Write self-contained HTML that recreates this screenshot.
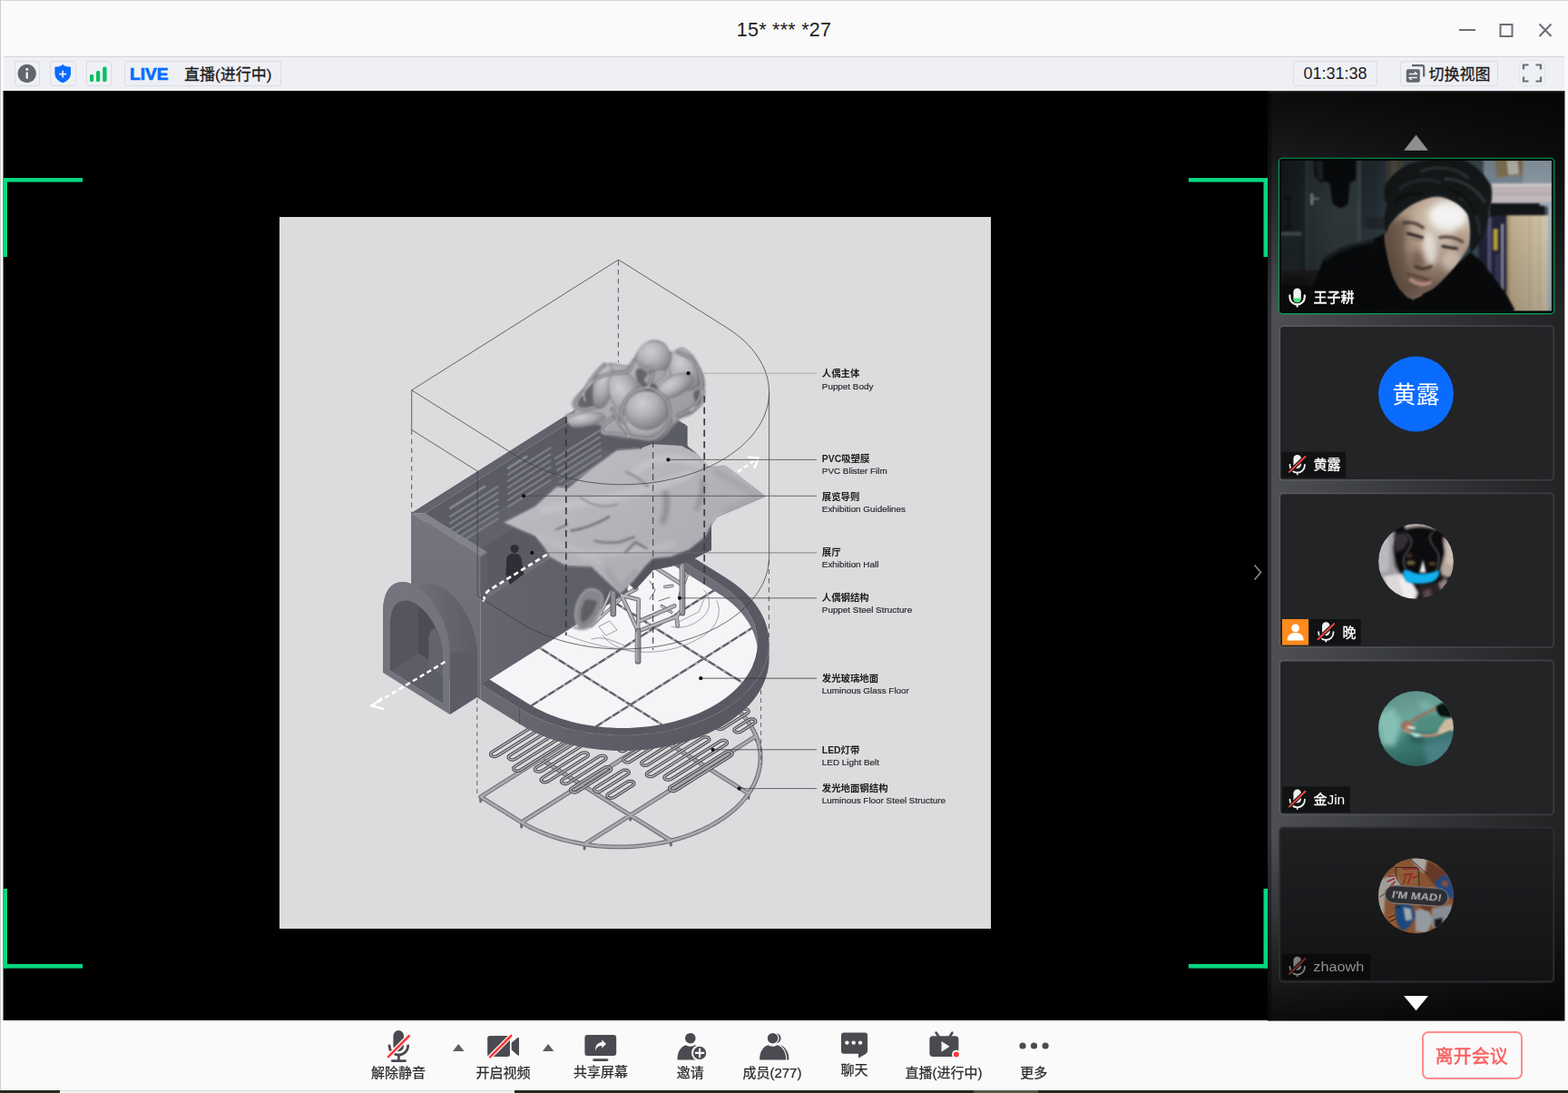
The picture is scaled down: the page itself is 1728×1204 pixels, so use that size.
<!DOCTYPE html>
<html lang="zh"><head><meta charset="utf-8"><title>腾讯会议</title>
<style>
html,body{margin:0;padding:0}
body{width:1728px;height:1204px;position:relative;overflow:hidden;background:#fafafa;font-family:"Liberation Sans",sans-serif;color:#1a1a1a}
.abs{position:absolute}
svg.ov{position:absolute;left:0;top:0;width:1728px;height:1204px;overflow:visible;pointer-events:none}
#titlebar{left:0;top:0;width:1728px;height:62px;background:#fafafa;border-top:1px solid #d6d6d6;border-left:1px solid #cfcfcf;box-sizing:border-box}
#title{left:0;top:20.5px;width:1728px;text-align:center;font-size:21.5px;line-height:25px;letter-spacing:0.25px;color:#222}
#toolbar{left:4px;top:62px;width:1720px;height:38px;background:#eff0f5;border-top:1px solid #d4d5d9;box-sizing:border-box}
.tb{position:absolute;top:67px;height:28px;box-sizing:border-box;border:1px solid #dcdde2;border-radius:3px;background:#eff0f5}
#time{left:1425px;width:93px;font-size:18px;line-height:27px;text-align:center;color:#1c1c1c}
#stage{left:4px;top:100px;width:1394px;height:1024px;background:#000}
#sidebar{left:1398px;top:100px;width:326px;height:1024px;background:linear-gradient(180deg,#0b0b0c 0%,#101011 4%,#2b2c2e 22%,#434447 38%,#48494d 50%,#434447 62%,#2b2c2e 80%,#101011 96%,#0b0b0c 100%)}
#bottombar{left:1px;top:1124px;width:1727px;height:77px;background:#fafafa}
#deskstrip{left:0;top:1201px;width:1728px;height:3px;background:#262a1c}
.tile{position:absolute;left:1410px;width:303px;height:171px;box-sizing:border-box;border:1px solid #55565a;border-radius:4px;background:#242528;overflow:hidden}
.tag{position:absolute;height:28px;background:#111213;color:#fff;font-size:15px;line-height:28px}
#leave{left:1567px;top:1136px;width:111px;height:53px;box-sizing:border-box;border:2px solid #ff8c8c;border-radius:7px;background:#fafafa}
</style>
</head>
<body>
<div id="titlebar" class="abs"></div>
<div class="abs" style="left:0;top:0;width:1px;height:1201px;background:#cdcdcd"></div>
<div id="title" class="abs">15* *** *27</div>
<div id="toolbar" class="abs"></div>
<div class="tb" style="left:16px;width:28px"></div>
<div class="tb" style="left:55px;width:29px"></div>
<div class="tb" style="left:95px;width:28px"></div>
<div class="tb" style="left:137px;width:173px"></div>
<div class="tb" id="time">01:31:38</div>
<div class="tb" style="left:1543px;width:108px"></div>
<div class="tb" style="left:1674px;top:66px;width:29px;height:29px;border-radius:6px;border-color:#e3e4e8"></div>
<div id="stage" class="abs"></div>
<div class="abs" style="left:3px;top:100px;width:1px;height:1024px;background:#7c7c7c"></div>
<div id="sidebar" class="abs"></div>
<div id="bottombar" class="abs"></div>
<div id="deskstrip" class="abs"></div>
<div class="abs" style="left:66px;top:1201px;width:501px;height:3px;background:#f4f4f4;border-top:1px solid #d9d9d9;box-sizing:border-box"></div>
<div class="abs" style="left:1073px;top:1201px;width:71px;height:3px;background:#565949"></div>
<svg class="ov" viewBox="0 0 1728 1204" aria-label="window chrome">
  <!-- window controls -->
  <g stroke="#6b6e76" stroke-width="2" fill="none">
    <path d="M1608 33H1626"/>
    <rect x="1653.5" y="27" width="13" height="13"/>
    <path d="M1696.5 26.5L1709.5 40M1709.5 26.5L1696.5 40"/>
  </g>
  <!-- info -->
  <circle cx="29.7" cy="81" r="10.2" fill="#63666d"/>
  <circle cx="29.7" cy="76.3" r="1.5" fill="#eff0f5"/>
  <rect x="28.5" y="79.3" width="2.4" height="7.6" rx="1.2" fill="#eff0f5"/>
  <!-- shield -->
  <path d="M69.2 71 C66.5 73.3 63.5 73.6 60.4 73.7 V80.5 C60.4 86 64.2 89.6 69.2 91.2 C74.2 89.6 78 86 78 80.5 V73.7 C74.9 73.6 71.9 73.3 69.2 71Z" fill="#0a6cff"/>
  <path d="M69.2 78.2V85M65.8 81.6H72.6" stroke="#eff0f5" stroke-width="1.6" stroke-linecap="round"/>
  <!-- signal -->
  <g fill="#07c160">
    <rect x="99" y="82" width="4.2" height="8" rx="1.6"/>
    <rect x="106" y="78" width="4.2" height="12" rx="1.6"/>
    <rect x="113.2" y="73.6" width="4.4" height="16.4" rx="1.6"/>
  </g>
  <!-- LIVE -->
  <text x="143" y="87.6" font-family="Liberation Sans, sans-serif" font-weight="bold" font-size="19" fill="#0a6cff" stroke="#0a6cff" stroke-width="0.7" textLength="42.5" lengthAdjust="spacingAndGlyphs">LIVE</text>
  <g stroke="#1a1a1a" stroke-width="0.3"><text x="203" y="88.4" font-family="Liberation Sans, Noto Sans CJK SC, sans-serif" font-size="17" fill="#1a1a1a">直播(进行中)</text></g>
  <!-- switch view icon -->
  <g>
    <path d="M1556 72.2H1567.2Q1569.2 72.2 1569.2 74.2V84.5" fill="none" stroke="#63666d" stroke-width="2.2"/>
    <rect x="1549.8" y="76.2" width="15" height="14.6" rx="1.8" fill="#63666d"/>
    <path d="M1552.8 81.6H1561.6L1559 79.2M1561.8 85.6H1553L1555.6 88" fill="none" stroke="#eff0f5" stroke-width="1.5" stroke-linejoin="round"/>
  </g>
  <g stroke="#1a1a1a" stroke-width="0.3"><text x="1574.4" y="88.3" font-family="Liberation Sans, Noto Sans CJK SC, sans-serif" font-size="17" fill="#1a1a1a">切换视图</text></g>
  <!-- fullscreen -->
  <path d="M1679 76.5V71.5H1684.5M1692.5 71.5H1698V76.5M1698 84.5V89.5H1692.5M1684.5 89.5H1679V84.5" fill="none" stroke="#6b6e76" stroke-width="2.2"/>
</svg>
<svg class="ov" viewBox="0 0 1728 1204" aria-label="shared screen">
<defs><clipPath id="contentclip"><rect x="308" y="239" width="784" height="784"/></clipPath><filter color-interpolation-filters="sRGB" id="vidblur" x="0" y="0" width="100%" height="100%"><feGaussianBlur stdDeviation="0.55"/></filter></defs>
<!-- green brackets -->
<g fill="#05d780">
<rect x="3.5" y="196" width="87.5" height="4.5"/><rect x="3.5" y="196" width="4.5" height="87"/>
<rect x="1309.8" y="196" width="87.3" height="4.5"/><rect x="1392.5" y="196" width="4.6" height="87"/>
<rect x="3.5" y="1062" width="87.5" height="4.6"/><rect x="3.5" y="979" width="4.5" height="87.6"/>
<rect x="1309.8" y="1062" width="87.3" height="4.6"/><rect x="1392.5" y="979" width="4.6" height="87.6"/>
</g>
<g clip-path="url(#contentclip)"><g filter="url(#vidblur)">
<rect x="308" y="239" width="784" height="784" fill="#dcdcde"/>
<g fill="none" stroke-linecap="round" stroke-linejoin="round"><path d="M529.7 877.7v5M574.7 905.9v5M739.3 926.1v5M825 874.2v5M644.1 930v5M833.3 810.8v5M694.7 898.1v5M724.7 811.3v5" stroke="#6c6c72" stroke-width="3"/><path d="M529.7 877.7L749.7 738.9 M574.7 905.9L794.7 767.2 M644.1 930L833.3 810.8 M529.7 877.7L572.5 904.5 M595.7 836L739.3 926.1 M679.7 783.1L825 874.2 M749.7 738.9L792.5 765.8 M792.5 765.8L798.1 769.5L803.4 773.4L808.4 777.4L813 781.6L817.2 786L821.1 790.5L824.6 795.1L827.7 799.8L830.4 804.6L832.8 809.6L834.7 814.5L836.1 819.6L837.2 824.6L837.9 829.7L838.1 834.9L837.9 840L837.2 845.1L836.1 850.2L834.7 855.2L832.8 860.2L830.4 865.1L827.7 869.9L824.6 874.7L821.1 879.3L817.2 883.8L813 888.2L808.4 892.4L803.4 896.5L798.1 900.4L792.5 904.1L786.6 907.6L780.4 911L773.9 914.1L767.2 917L760.3 919.7L753.1 922.2L745.8 924.4L738.2 926.3L730.6 928.1L722.8 929.5L714.8 930.7L706.8 931.7L698.8 932.4L690.6 932.8L682.5 932.9L674.4 932.8L666.2 932.4L658.2 931.8L650.2 930.9L642.2 929.7L634.4 928.2L626.8 926.5L619.2 924.6L611.9 922.4L604.7 920L597.8 917.3L591.1 914.4L584.6 911.3L578.4 908L572.5 904.5" stroke="#66666c" stroke-width="4.8"/><path d="M529.7 877.7L749.7 738.9 M574.7 905.9L794.7 767.2 M644.1 930L833.3 810.8 M529.7 877.7L572.5 904.5 M595.7 836L739.3 926.1 M679.7 783.1L825 874.2 M749.7 738.9L792.5 765.8 M792.5 765.8L798.1 769.5L803.4 773.4L808.4 777.4L813 781.6L817.2 786L821.1 790.5L824.6 795.1L827.7 799.8L830.4 804.6L832.8 809.6L834.7 814.5L836.1 819.6L837.2 824.6L837.9 829.7L838.1 834.9L837.9 840L837.2 845.1L836.1 850.2L834.7 855.2L832.8 860.2L830.4 865.1L827.7 869.9L824.6 874.7L821.1 879.3L817.2 883.8L813 888.2L808.4 892.4L803.4 896.5L798.1 900.4L792.5 904.1L786.6 907.6L780.4 911L773.9 914.1L767.2 917L760.3 919.7L753.1 922.2L745.8 924.4L738.2 926.3L730.6 928.1L722.8 929.5L714.8 930.7L706.8 931.7L698.8 932.4L690.6 932.8L682.5 932.9L674.4 932.8L666.2 932.4L658.2 931.8L650.2 930.9L642.2 929.7L634.4 928.2L626.8 926.5L619.2 924.6L611.9 922.4L604.7 920L597.8 917.3L591.1 914.4L584.6 911.3L578.4 908L572.5 904.5" stroke="#a9a9af" stroke-width="2.9"/></g>
<g fill="none" stroke-linejoin="round"><path d="M548 832.7L546 833.4L543.8 833.4L541.8 832.7L540.7 831.5L540.7 830L541.8 828.8L590.6 798L592.6 797.3L594.8 797.3L596.8 798L597.9 799.2L597.9 800.7L596.8 801.9ZM567.6 836.2L565.6 836.9L563.4 836.9L561.4 836.2L560.3 834.9L560.3 833.5L561.4 832.3L610.2 801.5L612.2 800.8L614.4 800.8L616.4 801.5L617.5 802.7L617.5 804.2L616.4 805.4ZM573.2 848.5L571.2 849.2L569 849.2L567 848.5L565.9 847.3L565.9 845.8L567 844.6L615.8 813.8L617.8 813.1L620 813.1L622 813.8L623.1 815.1L623.1 816.5L622 817.7ZM596.8 849.4L594.9 850.1L592.6 850.1L590.6 849.4L589.5 848.2L589.5 846.8L590.6 845.5L635.4 817.3L637.4 816.6L639.6 816.6L641.6 817.3L642.7 818.5L642.7 820L641.6 821.2ZM603.7 861L601.7 861.7L599.4 861.7L597.5 861L596.3 859.7L596.3 858.3L597.5 857.1L641 829.6L643 828.9L645.2 828.9L647.2 829.6L648.3 830.9L648.3 832.3L647.2 833.5ZM626.1 862.7L624.1 863.4L621.8 863.4L619.9 862.7L618.7 861.5L618.7 860L619.9 858.8L660.6 833.1L662.6 832.4L664.8 832.4L666.8 833.1L667.9 834.3L667.9 835.8L666.8 837ZM636.1 872.2L634.2 872.9L631.9 872.9L629.9 872.2L628.8 871L628.8 869.5L629.9 868.3L666.2 845.4L668.2 844.7L670.4 844.7L672.4 845.4L673.5 846.7L673.5 848.1L672.4 849.3ZM662.1 871.6L660.2 872.4L657.9 872.4L655.9 871.6L654.8 870.4L654.8 869L655.9 867.7L685.8 848.9L687.8 848.2L690 848.2L692 848.9L693.1 850.1L693.1 851.6L692 852.8ZM676.5 878.4L674.5 879.1L672.2 879.2L670.3 878.4L669.1 877.2L669.1 875.8L670.3 874.5L691.4 861.2L693.4 860.5L695.6 860.5L697.6 861.2L698.7 862.5L698.7 863.9L697.6 865.1ZM619 791.7L617 792.4L614.8 792.4L612.8 791.7L611.7 790.5L611.7 789L612.8 787.8L673.6 749.5L675.6 748.8L677.8 748.7L679.8 749.5L680.9 750.7L680.9 752.1L679.8 753.4ZM638.6 795.2L636.6 795.9L634.4 795.9L632.4 795.2L631.3 794L631.3 792.5L632.4 791.3L693.2 753L695.2 752.2L697.4 752.2L699.4 752.9L700.5 754.2L700.5 755.6L699.4 756.8ZM644.2 807.5L642.2 808.2L640 808.2L638 807.5L636.9 806.3L636.9 804.8L638 803.6L698.8 765.3L700.8 764.6L703 764.5L705 765.3L706.1 766.5L706.1 767.9L705 769.2ZM663.8 811L661.8 811.7L659.6 811.7L657.6 811L656.5 809.8L656.5 808.3L657.6 807.1L718.4 768.8L720.4 768L722.6 768L724.6 768.7L725.7 770L725.7 771.4L724.6 772.6ZM669.4 823.3L667.4 824L665.2 824L663.2 823.3L662.1 822.1L662.1 820.6L663.2 819.4L724 781.1L726 780.4L728.2 780.3L730.2 781.1L731.3 782.3L731.3 783.7L730.2 785ZM689 826.8L687 827.5L684.8 827.5L682.8 826.8L681.7 825.6L681.7 824.1L682.8 822.9L743.6 784.6L745.6 783.8L747.8 783.8L749.8 784.5L750.9 785.8L750.9 787.2L749.8 788.4ZM694.6 839.1L692.6 839.8L690.4 839.8L688.4 839.1L687.3 837.9L687.3 836.4L688.4 835.2L749.2 796.9L751.2 796.2L753.4 796.1L755.4 796.9L756.5 798.1L756.5 799.5L755.4 800.8ZM714.2 842.6L712.2 843.3L710 843.3L708 842.6L706.9 841.4L706.9 839.9L708 838.7L768.8 800.4L770.8 799.6L773 799.6L775 800.3L776.1 801.6L776.1 803L775 804.2ZM719.8 854.9L717.8 855.6L715.6 855.6L713.6 854.9L712.5 853.7L712.5 852.2L713.6 851L774.4 812.7L776.4 812L778.6 811.9L780.6 812.7L781.7 813.9L781.7 815.3L780.6 816.6ZM739.4 858.4L737.4 859.1L735.2 859.1L733.2 858.4L732.1 857.2L732.1 855.7L733.2 854.5L794 816.2L796 815.4L798.2 815.4L800.2 816.1L801.3 817.4L801.3 818.8L800.2 820ZM745 870.7L743 871.4L740.8 871.4L738.8 870.7L737.7 869.5L737.7 868L738.8 866.8L799.6 828.5L801.6 827.8L803.8 827.7L805.8 828.5L806.9 829.7L806.9 831.1L805.8 832.4ZM696 739.4L694 740.1L691.8 740.1L689.8 739.4L688.7 738.1L688.7 736.7L689.8 735.5L746.6 699.7L748.6 699L750.8 698.9L752.8 699.7L753.9 700.9L753.9 702.3L752.8 703.6ZM715.6 742.9L713.6 743.6L711.4 743.6L709.4 742.9L708.3 741.6L708.3 740.2L709.4 739L766.2 703.2L768.2 702.4L770.4 702.4L772.4 703.1L773.5 704.4L773.5 705.8L772.4 707ZM721.2 755.2L719.2 755.9L717 755.9L715 755.2L713.9 753.9L713.9 752.5L715 751.3L771.8 715.5L773.8 714.8L776 714.7L778 715.5L779.1 716.7L779.1 718.1L778 719.4ZM740.8 758.7L738.8 759.4L736.6 759.4L734.6 758.7L733.5 757.4L733.5 756L734.6 754.8L785.3 722.8L787.2 722.1L789.5 722.1L791.5 722.8L792.6 724L792.6 725.5L791.5 726.7ZM746.4 771L744.4 771.7L742.2 771.7L740.2 771L739.1 769.7L739.1 768.3L740.2 767.1L789.6 735.9L791.6 735.2L793.9 735.2L795.8 735.9L797 737.1L797 738.6L795.8 739.8ZM766 774.5L764 775.2L761.8 775.2L759.8 774.5L758.7 773.2L758.7 771.8L759.8 770.6L806.4 741.2L808.4 740.5L810.7 740.4L812.6 741.2L813.8 742.4L813.8 743.8L812.6 745.1ZM771.6 786.8L769.6 787.5L767.4 787.5L765.4 786.8L764.3 785.5L764.3 784.1L765.4 782.9L807.6 756.3L809.5 755.6L811.8 755.6L813.8 756.3L814.9 757.5L814.9 758.9L813.8 760.2ZM791.2 790.3L789.2 791L787 791L785 790.3L783.9 789L783.9 787.6L785 786.4L820.8 763.8L822.7 763.1L825 763.1L827 763.8L828.1 765L828.1 766.5L827 767.7ZM796.8 802.6L794.8 803.3L792.6 803.3L790.6 802.6L789.5 801.3L789.5 799.9L790.6 798.7L817.6 781.6L819.6 780.9L821.9 780.9L823.8 781.6L825 782.9L825 784.3L823.8 785.5ZM816.4 806.1L814.4 806.8L812.2 806.8L810.2 806.1L809.1 804.8L809.1 803.4L810.2 802.2L825.2 792.7L827.2 792L829.5 792L831.4 792.7L832.6 793.9L832.6 795.3L831.4 796.6Z" stroke="#4f4f55" stroke-width="3.5"/><path d="M548 832.7L546 833.4L543.8 833.4L541.8 832.7L540.7 831.5L540.7 830L541.8 828.8L590.6 798L592.6 797.3L594.8 797.3L596.8 798L597.9 799.2L597.9 800.7L596.8 801.9ZM567.6 836.2L565.6 836.9L563.4 836.9L561.4 836.2L560.3 834.9L560.3 833.5L561.4 832.3L610.2 801.5L612.2 800.8L614.4 800.8L616.4 801.5L617.5 802.7L617.5 804.2L616.4 805.4ZM573.2 848.5L571.2 849.2L569 849.2L567 848.5L565.9 847.3L565.9 845.8L567 844.6L615.8 813.8L617.8 813.1L620 813.1L622 813.8L623.1 815.1L623.1 816.5L622 817.7ZM596.8 849.4L594.9 850.1L592.6 850.1L590.6 849.4L589.5 848.2L589.5 846.8L590.6 845.5L635.4 817.3L637.4 816.6L639.6 816.6L641.6 817.3L642.7 818.5L642.7 820L641.6 821.2ZM603.7 861L601.7 861.7L599.4 861.7L597.5 861L596.3 859.7L596.3 858.3L597.5 857.1L641 829.6L643 828.9L645.2 828.9L647.2 829.6L648.3 830.9L648.3 832.3L647.2 833.5ZM626.1 862.7L624.1 863.4L621.8 863.4L619.9 862.7L618.7 861.5L618.7 860L619.9 858.8L660.6 833.1L662.6 832.4L664.8 832.4L666.8 833.1L667.9 834.3L667.9 835.8L666.8 837ZM636.1 872.2L634.2 872.9L631.9 872.9L629.9 872.2L628.8 871L628.8 869.5L629.9 868.3L666.2 845.4L668.2 844.7L670.4 844.7L672.4 845.4L673.5 846.7L673.5 848.1L672.4 849.3ZM662.1 871.6L660.2 872.4L657.9 872.4L655.9 871.6L654.8 870.4L654.8 869L655.9 867.7L685.8 848.9L687.8 848.2L690 848.2L692 848.9L693.1 850.1L693.1 851.6L692 852.8ZM676.5 878.4L674.5 879.1L672.2 879.2L670.3 878.4L669.1 877.2L669.1 875.8L670.3 874.5L691.4 861.2L693.4 860.5L695.6 860.5L697.6 861.2L698.7 862.5L698.7 863.9L697.6 865.1ZM619 791.7L617 792.4L614.8 792.4L612.8 791.7L611.7 790.5L611.7 789L612.8 787.8L673.6 749.5L675.6 748.8L677.8 748.7L679.8 749.5L680.9 750.7L680.9 752.1L679.8 753.4ZM638.6 795.2L636.6 795.9L634.4 795.9L632.4 795.2L631.3 794L631.3 792.5L632.4 791.3L693.2 753L695.2 752.2L697.4 752.2L699.4 752.9L700.5 754.2L700.5 755.6L699.4 756.8ZM644.2 807.5L642.2 808.2L640 808.2L638 807.5L636.9 806.3L636.9 804.8L638 803.6L698.8 765.3L700.8 764.6L703 764.5L705 765.3L706.1 766.5L706.1 767.9L705 769.2ZM663.8 811L661.8 811.7L659.6 811.7L657.6 811L656.5 809.8L656.5 808.3L657.6 807.1L718.4 768.8L720.4 768L722.6 768L724.6 768.7L725.7 770L725.7 771.4L724.6 772.6ZM669.4 823.3L667.4 824L665.2 824L663.2 823.3L662.1 822.1L662.1 820.6L663.2 819.4L724 781.1L726 780.4L728.2 780.3L730.2 781.1L731.3 782.3L731.3 783.7L730.2 785ZM689 826.8L687 827.5L684.8 827.5L682.8 826.8L681.7 825.6L681.7 824.1L682.8 822.9L743.6 784.6L745.6 783.8L747.8 783.8L749.8 784.5L750.9 785.8L750.9 787.2L749.8 788.4ZM694.6 839.1L692.6 839.8L690.4 839.8L688.4 839.1L687.3 837.9L687.3 836.4L688.4 835.2L749.2 796.9L751.2 796.2L753.4 796.1L755.4 796.9L756.5 798.1L756.5 799.5L755.4 800.8ZM714.2 842.6L712.2 843.3L710 843.3L708 842.6L706.9 841.4L706.9 839.9L708 838.7L768.8 800.4L770.8 799.6L773 799.6L775 800.3L776.1 801.6L776.1 803L775 804.2ZM719.8 854.9L717.8 855.6L715.6 855.6L713.6 854.9L712.5 853.7L712.5 852.2L713.6 851L774.4 812.7L776.4 812L778.6 811.9L780.6 812.7L781.7 813.9L781.7 815.3L780.6 816.6ZM739.4 858.4L737.4 859.1L735.2 859.1L733.2 858.4L732.1 857.2L732.1 855.7L733.2 854.5L794 816.2L796 815.4L798.2 815.4L800.2 816.1L801.3 817.4L801.3 818.8L800.2 820ZM745 870.7L743 871.4L740.8 871.4L738.8 870.7L737.7 869.5L737.7 868L738.8 866.8L799.6 828.5L801.6 827.8L803.8 827.7L805.8 828.5L806.9 829.7L806.9 831.1L805.8 832.4ZM696 739.4L694 740.1L691.8 740.1L689.8 739.4L688.7 738.1L688.7 736.7L689.8 735.5L746.6 699.7L748.6 699L750.8 698.9L752.8 699.7L753.9 700.9L753.9 702.3L752.8 703.6ZM715.6 742.9L713.6 743.6L711.4 743.6L709.4 742.9L708.3 741.6L708.3 740.2L709.4 739L766.2 703.2L768.2 702.4L770.4 702.4L772.4 703.1L773.5 704.4L773.5 705.8L772.4 707ZM721.2 755.2L719.2 755.9L717 755.9L715 755.2L713.9 753.9L713.9 752.5L715 751.3L771.8 715.5L773.8 714.8L776 714.7L778 715.5L779.1 716.7L779.1 718.1L778 719.4ZM740.8 758.7L738.8 759.4L736.6 759.4L734.6 758.7L733.5 757.4L733.5 756L734.6 754.8L785.3 722.8L787.2 722.1L789.5 722.1L791.5 722.8L792.6 724L792.6 725.5L791.5 726.7ZM746.4 771L744.4 771.7L742.2 771.7L740.2 771L739.1 769.7L739.1 768.3L740.2 767.1L789.6 735.9L791.6 735.2L793.9 735.2L795.8 735.9L797 737.1L797 738.6L795.8 739.8ZM766 774.5L764 775.2L761.8 775.2L759.8 774.5L758.7 773.2L758.7 771.8L759.8 770.6L806.4 741.2L808.4 740.5L810.7 740.4L812.6 741.2L813.8 742.4L813.8 743.8L812.6 745.1ZM771.6 786.8L769.6 787.5L767.4 787.5L765.4 786.8L764.3 785.5L764.3 784.1L765.4 782.9L807.6 756.3L809.5 755.6L811.8 755.6L813.8 756.3L814.9 757.5L814.9 758.9L813.8 760.2ZM791.2 790.3L789.2 791L787 791L785 790.3L783.9 789L783.9 787.6L785 786.4L820.8 763.8L822.7 763.1L825 763.1L827 763.8L828.1 765L828.1 766.5L827 767.7ZM796.8 802.6L794.8 803.3L792.6 803.3L790.6 802.6L789.5 801.3L789.5 799.9L790.6 798.7L817.6 781.6L819.6 780.9L821.9 780.9L823.8 781.6L825 782.9L825 784.3L823.8 785.5ZM816.4 806.1L814.4 806.8L812.2 806.8L810.2 806.1L809.1 804.8L809.1 803.4L810.2 802.2L825.2 792.7L827.2 792L829.5 792L831.4 792.7L832.6 793.9L832.6 795.3L831.4 796.6Z" stroke="#c2c2c7" stroke-width="1.15"/></g>
<path d="M525.8 770V874M838.6 760V842" stroke="#55555a" stroke-width="0.9" stroke-dasharray="5 4" fill="none"/>
<path d="M513.7 744.6L741.6 600.9L792.4 642.8L797.8 646.4L802.9 650.2L807.7 654.1L812.1 658.1L816.2 662.3L820 666.6L823.3 671.1L826.3 675.6L829 680.3L831.2 685L833 689.8L834.4 694.6L835.5 699.5L836.1 704.4L836.3 709.4L836.1 714.3L835.5 719.2L834.4 724.1L833 729L831.2 733.8L829 738.5L826.3 743.2L823.3 747.7L820 752.2L816.2 756.5L812.1 760.7L807.7 764.8L802.9 768.7L797.8 772.5L792.4 776.1L786.7 779.5L780.7 782.7L774.5 785.7L768.1 788.5L761.4 791.1L754.5 793.5L747.4 795.6L740.1 797.5L732.8 799.2L725.2 800.6L717.6 801.7L709.9 802.7L702.1 803.3L694.3 803.7L686.5 803.9L678.6 803.7L670.8 803.4L663 802.7L655.3 801.8L647.7 800.7L640.1 799.3L632.8 797.7L625.5 795.8L618.4 793.7L611.5 791.4L604.8 788.8L598.4 786L592.2 783L586.2 779.8L580.5 776.4Z" fill="#f5f5f7"/>
<g fill="none"><path d="M585.7 777.2L793.6 646.1M656.9 800.2L830.4 690.8M578.7 703.6L729.2 798M659.7 652.6L817.4 751.4" stroke="#96969c" stroke-width="2.5"/><path d="M585.7 777.2L793.6 646.1M656.9 800.2L830.4 690.8M578.7 703.6L729.2 798M659.7 652.6L817.4 751.4" stroke="#29292d" stroke-width="1.65" stroke-dasharray="8 3"/><path d="M585.7 777.2L793.6 646.1M656.9 800.2L830.4 690.8M578.7 703.6L729.2 798M659.7 652.6L817.4 751.4" stroke="#d8d8dc" stroke-width="0.5"/></g>
<defs>
<linearGradient id="gRingO" x1="0" y1="0" x2="1" y2="0"><stop offset="0" stop-color="#6a6b74"/><stop offset="0.45" stop-color="#5c5d66"/><stop offset="1" stop-color="#565760"/></linearGradient>
<linearGradient id="gTun" x1="0" y1="0" x2="1" y2="0"><stop offset="0" stop-color="#777882"/><stop offset="0.5" stop-color="#696a74"/><stop offset="1" stop-color="#5b5c65"/></linearGradient>
<linearGradient id="gFaceX" x1="0" y1="0" x2="0" y2="1"><stop offset="0" stop-color="#74757f"/><stop offset="1" stop-color="#696a74"/></linearGradient>
<linearGradient id="gFaceY" x1="0" y1="0" x2="1" y2="0"><stop offset="0" stop-color="#64656f"/><stop offset="1" stop-color="#5b5c66"/></linearGradient>
</defs>
<path d="M732.6 605.6L791.4 642.5L791.4 642.5L796.7 646L801.8 649.7L806.5 653.6L810.9 657.6L815 661.8L818.7 666L822 670.4L825 675L827.6 679.6L829.8 684.2L831.6 689L833 693.8L834.1 698.6L834.7 703.5L834.9 708.4L834.7 713.3L834.1 718.1L833 723L831.6 727.8L829.8 732.5L829.8 743.5L831.6 738.8L833 734L834.1 729.1L834.7 724.3L834.9 719.4L834.7 714.5L834.1 709.6L833 704.8L831.6 700L829.8 695.2L827.6 690.6L825 686L822 681.4L818.7 677L815 672.8L810.9 668.6L806.5 664.6L801.8 660.7L796.7 657L791.4 653.5L791.4 653.5L732.6 616.6Z" fill="#6d6e77"/>
<path d="M741.6 599.9L800.4 636.8L800.4 636.8L805.3 640L809.9 643.3L814.3 646.7L818.5 650.3L822.4 654L826 657.7L829.4 661.6L832.5 665.6L835.3 669.6L837.9 673.7L840.1 677.9L842.1 682.1L843.8 686.4L845.2 690.8L846.2 695.1L847 699.5L847.4 703.9L847.6 708.4L847.4 712.8L847 717.2L846.2 721.6L845.2 726L843.8 730.3L842.1 734.6L840.1 738.8L837.9 743L835.3 747.2L832.5 751.2L829.4 755.2L826 759.1L822.4 762.8L818.5 766.5L814.3 770.1L809.9 773.6L805.3 776.9L800.4 780.1L795.3 783.2L790 786.1L784.6 788.9L778.9 791.5L773 793.9L767 796.2L760.9 798.4L754.6 800.4L748.1 802.1L741.6 803.8L734.9 805.2L728.2 806.4L721.3 807.5L714.4 808.4L707.5 809.1L700.5 809.6L693.5 809.9L686.5 810L679.4 809.9L672.4 809.6L665.4 809.1L658.5 808.5L651.6 807.6L644.7 806.6L638 805.4L631.3 804L624.8 802.4L618.3 800.6L612 798.6L605.9 796.5L599.9 794.2L594 791.8L588.3 789.2L582.9 786.4L577.6 783.5L572.5 780.5L529.7 753.7L538.7 748L581.5 774.8L586.2 777.6L591 780.3L596.1 782.8L601.3 785.2L606.7 787.5L612.2 789.6L617.9 791.5L623.7 793.3L629.7 795L635.7 796.4L641.8 797.7L648 798.8L654.3 799.8L660.7 800.6L667.1 801.2L673.5 801.6L680 801.9L686.5 802L692.9 801.9L699.4 801.6L705.8 801.1L712.2 800.5L718.6 799.7L724.9 798.7L731.1 797.6L737.2 796.2L743.2 794.8L749.2 793.1L755 791.3L760.7 789.3L766.2 787.2L771.6 784.9L776.8 782.5L781.9 780L786.7 777.3L791.4 774.4L795.9 771.5L800.1 768.4L804.2 765.2L808 762L811.6 758.6L815 755.1L818.1 751.5L821 747.8L823.6 744.1L825.9 740.3L828 736.5L829.8 732.5L831.4 728.6L832.6 724.6L833.6 720.6L834.3 716.5L834.7 712.5L834.9 708.4L834.7 704.3L834.3 700.2L833.6 696.2L832.6 692.2L831.4 688.2L829.8 684.2L828 680.3L825.9 676.5L823.6 672.7L821 669L818.1 665.3L815 661.8L811.6 658.3L808 654.9L804.2 651.6L800.1 648.5L795.9 645.4L791.4 642.5L791.4 642.5L732.6 605.6Z" fill="#585962"/>
<path d="M847.6 708.4L847.5 712.3L847.1 716.3L846.5 720.3L845.6 724.2L844.5 728.1L843.1 732L841.5 735.9L839.7 739.7L837.6 743.4L835.3 747.2L832.8 750.8L830 754.4L827.1 757.9L823.9 761.3L820.4 764.7L816.8 768L813 771.1L809 774.2L804.8 777.2L800.4 780.1L795.8 782.9L791.1 785.5L786.2 788L781.2 790.4L776 792.7L770.7 794.9L765.2 796.9L759.6 798.8L753.9 800.5L748.1 802.1L742.2 803.6L736.2 804.9L730.2 806.1L724.1 807.1L717.9 808L711.7 808.7L705.4 809.2L699.1 809.6L692.8 809.9L686.5 810L680.1 809.9L673.8 809.7L667.5 809.3L661.2 808.8L655 808.1L648.8 807.2L642.7 806.2L636.7 805.1L630.7 803.8L624.8 802.4L619 800.8L613.3 799L607.7 797.2L602.2 795.2L596.9 793L591.7 790.8L586.7 788.4L581.8 785.9L577.1 783.2L572.5 780.5L529.7 753.7L529.7 770.7L572.5 797.5L577.1 800.2L581.8 802.9L586.7 805.4L591.7 807.8L596.9 810L602.2 812.2L607.7 814.2L613.3 816L619 817.8L624.8 819.4L630.7 820.8L636.7 822.1L642.7 823.2L648.8 824.2L655 825.1L661.2 825.8L667.5 826.3L673.8 826.7L680.1 826.9L686.5 827L692.8 826.9L699.1 826.6L705.4 826.2L711.7 825.7L717.9 825L724.1 824.1L730.2 823.1L736.2 821.9L742.2 820.6L748.1 819.1L753.9 817.5L759.6 815.8L765.2 813.9L770.7 811.9L776 809.7L781.2 807.4L786.2 805L791.1 802.5L795.8 799.9L800.4 797.1L804.8 794.2L809 791.2L813 788.1L816.8 785L820.4 781.7L823.9 778.3L827.1 774.9L830 771.4L832.8 767.8L835.3 764.2L837.6 760.4L839.7 756.7L841.5 752.9L843.1 749L844.5 745.1L845.6 741.2L846.5 737.3L847.1 733.3L847.5 729.3L847.6 725.4Z" fill="url(#gRingO)"/>
<path d="M847.6 708.4L847.5 712.3L847.1 716.3L846.5 720.3L845.6 724.2L844.5 728.1L843.1 732L841.5 735.9L839.7 739.7L837.6 743.4L835.3 747.2L832.8 750.8L830 754.4L827.1 757.9L823.9 761.3L820.4 764.7L816.8 768L813 771.1L809 774.2L804.8 777.2L800.4 780.1L795.8 782.9L791.1 785.5L786.2 788L781.2 790.4L776 792.7L770.7 794.9L765.2 796.9L759.6 798.8L753.9 800.5L748.1 802.1L742.2 803.6L736.2 804.9L730.2 806.1L724.1 807.1L717.9 808L711.7 808.7L705.4 809.2L699.1 809.6L692.8 809.9L686.5 810L680.1 809.9L673.8 809.7L667.5 809.3L661.2 808.8L655 808.1L648.8 807.2L642.7 806.2L636.7 805.1L630.7 803.8L624.8 802.4L619 800.8L613.3 799L607.7 797.2L602.2 795.2L596.9 793L591.7 790.8L586.7 788.4L581.8 785.9L577.1 783.2L572.5 780.5L529.7 753.7" fill="none" stroke="#73747d" stroke-width="0.6"/>
<path d="M572.5 780.5L572.5 797.5" stroke="#4a4b53" stroke-width="0.8"/>
<path d="M529.7 662.7L691.7 560.5L691.7 652.5L529.7 754.7Z" fill="url(#gFaceY)"/>
<path d="M468.7 615L677.1 483.6L745.6 526.5L537.2 657.9Z" fill="#595a63"/>
<path d="M468.7 615L677.1 483.6L699.1 497.4L490.7 628.8Z" fill="#60616b"/>
<path d="M533.2 655.4L685.7 559.3L689.7 561.8L537.2 657.9Z" fill="#6c6d77"/>
<path d="M468.7 565.3L689.1 426.3L689.1 476L468.7 615Z" fill="#5a5b65"/>
<g fill="none"><path d="M495.2 560.6L535.2 535.3" stroke="#82838d" stroke-width="3"/><path d="M495.2 569.6L549.2 535.5" stroke="#7b7c86" stroke-width="2.4"/><path d="M495.2 576.7L549.2 542.6" stroke="#7b7c86" stroke-width="2.4"/><path d="M495.2 583.8L549.2 549.7" stroke="#7b7c86" stroke-width="2.4"/><path d="M495.2 590.9L549.2 556.8" stroke="#7b7c86" stroke-width="2.4"/><path d="M495.2 598L549.2 563.9" stroke="#7b7c86" stroke-width="2.4"/><path d="M495.2 605.1L549.2 571" stroke="#7b7c86" stroke-width="2.4"/><path d="M559.2 516.2L581.2 502.3" stroke="#82838d" stroke-width="3"/><path d="M559.2 523.2L607.2 492.9" stroke="#7b7c86" stroke-width="2.4"/><path d="M559.2 530.3L607.2 500" stroke="#7b7c86" stroke-width="2.4"/><path d="M559.2 537.4L607.2 507.1" stroke="#7b7c86" stroke-width="2.4"/><path d="M559.2 544.5L607.2 514.2" stroke="#7b7c86" stroke-width="2.4"/><path d="M559.2 551.6L607.2 521.3" stroke="#7b7c86" stroke-width="2.4"/><path d="M559.2 558.7L607.2 528.4" stroke="#7b7c86" stroke-width="2.4"/><path d="M611.2 505.4L661.2 473.9" stroke="#7b7c86" stroke-width="2.4"/><path d="M612.4 512L661.7 480.9" stroke="#7b7c86" stroke-width="2.4"/><path d="M613.6 518.5L662.2 487.9" stroke="#7b7c86" stroke-width="2.4"/><path d="M614.8 525.1L662.7 494.9" stroke="#7b7c86" stroke-width="2.4"/><path d="M616 531.6L663.2 501.8" stroke="#7b7c86" stroke-width="2.4"/><path d="M617.2 538.1L663.7 508.8" stroke="#7b7c86" stroke-width="2.4"/><path d="M618.4 544.7L664.2 515.8" stroke="#7b7c86" stroke-width="2.4"/></g>
<path d="M453.7 565.3L681.6 421.6L689.1 426.3L468.7 565.3Z" fill="#62636d"/>
<path d="M669.6 429.2L681.6 421.6L757.6 469.3L745.6 476.8Z" fill="#686973"/>
<path d="M745.6 476.8L757.6 469.3L757.6 581L745.6 588.5Z" fill="#585962"/>
<path d="M453.7 565.3L529.7 613L529.7 770.7L453.7 723Z" fill="url(#gFaceX)"/>
<path d="M529.7 613L537.2 608.2L537.2 657.9L529.7 662.7Z" fill="#5d5e68"/>
<path d="M453.7 565.3L468.7 565.3L537.2 608.2L529.7 613Z" fill="#82838d"/>
<path d="M453.7 565.3L621.6 459.4M453.7 565.3L453.7 683" fill="none" stroke="#4b4c54" stroke-width="0.7"/>
<g fill="#2e2e34"><circle cx="567.1" cy="604.6" r="4.6"/><path d="M558.4 614.5C559.5 611 563 609.6 567 609.8C571.5 610 574 612 574.6 616L577.3 632.6L570.5 637.6L562 644L557.4 633Z"/></g>
<path d="M532.9 662.7C533.8 655.5 536 651.6 539.7 649.7L603.3 610.4" fill="none" stroke="#fff" stroke-width="2.7" stroke-dasharray="5.6 3.7"/>
<path d="M452.2 722.1L452.2 674.1L452.2 674.1L452.5 667.9L453.5 662.2L455 657.1L457.1 652.7L459.8 649.1L463 646.2L466.6 644.3L470.6 643.3L474.9 643.1L479.4 643.9L484.2 645.6L488.9 648.2L493.7 651.7L498.5 655.9L503 660.8L507.3 666.3L511.3 672.4L514.9 678.8L518.1 685.6L520.8 692.6L522.9 699.7L524.4 706.7L525.4 713.6L525.7 720.1L525.7 768.1Z" fill="url(#gTun)"/><path d="M422.2 741L422.2 672L422.2 672L422.5 665.8L423.5 660.1L425 655L427.1 650.6L429.8 647L433 644.2L436.6 642.2L440.6 641.2L444.9 641L449.4 641.8L454.2 643.5L458.9 646.1L463.7 649.6L468.5 653.8L473 658.7L477.3 664.2L481.3 670.3L484.9 676.7L488.1 683.5L490.8 690.5L492.9 697.6L494.4 704.6L495.4 711.5L495.7 718.1L495.7 787.1L525.7 768.1L525.7 720.1L525.4 713.6L524.4 706.7L522.9 699.7L520.8 692.6L518.1 685.6L514.9 678.8L511.3 672.4L507.3 666.3L503 660.8L498.5 655.9L493.7 651.7L488.9 648.2L484.2 645.6L479.4 643.9L474.9 643.1L470.6 643.3L466.6 644.3L463 646.2L459.8 649.1L457.1 652.7L455 657.1L453.5 662.2L452.5 667.9L452.2 674.1L452.2 674.1L452.2 722.1Z" fill="url(#gTun)"/>
<path d="M495.7 718.1L495.7 787.1L525.7 768.1L525.7 720.1Z" fill="#5b5c65"/>
<path d="M422.2 741L422.2 672L422.2 672L422.5 665.8L423.5 660.1L425 655L427.1 650.6L429.8 647L433 644.2L436.6 642.2L440.6 641.2L444.9 641L449.4 641.8L454.2 643.5L458.9 646.1L463.7 649.6L468.5 653.8L473 658.7L477.3 664.2L481.3 670.3L484.9 676.7L488.1 683.5L490.8 690.5L492.9 697.6L494.4 704.6L495.4 711.5L495.7 718.1L495.7 787.1Z" fill="#73747e"/>
<path d="M430.2 738L430.2 686L430.2 686L430.4 681.2L431.2 676.7L432.4 672.7L434.1 669.3L436.1 666.4L438.6 664.2L441.4 662.7L444.6 661.9L447.9 661.8L451.5 662.4L455.2 663.8L458.9 665.8L462.7 668.5L466.4 671.7L470 675.6L473.3 679.9L476.5 684.7L479.3 689.7L481.8 695L483.8 700.5L485.5 706L486.7 711.5L487.5 716.9L487.7 722L487.7 774Z" fill="#4b4c55"/>
<clipPath id="tunclip"><path d="M430.2 738L430.2 686L430.2 686L430.4 681.2L431.2 676.7L432.4 672.7L434.1 669.3L436.1 666.4L438.6 664.2L441.4 662.7L444.6 661.9L447.9 661.8L451.5 662.4L455.2 663.8L458.9 665.8L462.7 668.5L466.4 671.7L470 675.6L473.3 679.9L476.5 684.7L479.3 689.7L481.8 695L483.8 700.5L485.5 706L486.7 711.5L487.5 716.9L487.7 722L487.7 774Z"/></clipPath>
<g clip-path="url(#tunclip)"><path d="M431.2 738.6L486.7 773.4L516.7 754.5L461.2 719.7Z" fill="#5c5d66"/><path d="M431.2 738.6L461.2 719.7L461.2 607.7L431.2 626.6Z" fill="#54555e"/><path d="M472.2 734.6L472.2 705.6L472.2 705.6L472.3 702.8L472.8 700.2L473.5 697.9L474.4 695.9L475.7 694.2L477.1 692.9L478.8 692L480.6 691.6L482.5 691.5L484.6 691.9L486.8 692.6L488.9 693.8L491.1 695.4L493.3 697.3L495.4 699.5L497.3 702.1L499.1 704.8L500.8 707.8L502.2 710.9L503.5 714.1L504.4 717.3L505.1 720.5L505.6 723.6L505.7 726.6L505.7 755.6Z" fill="#62636c"/></g>
<path d="M490.5 729L412 776" fill="none" stroke="#fff" stroke-width="2.4" stroke-dasharray="5.4 3.6"/><path d="M421 769L409.5 777.5L423 781" fill="none" stroke="#fff" stroke-width="2.4"/>
<defs>
<filter color-interpolation-filters="sRGB" id="db1" x="-5%" y="-5%" width="110%" height="110%"><feGaussianBlur stdDeviation="0.9"/></filter>
<filter color-interpolation-filters="sRGB" id="db2" x="-10%" y="-10%" width="120%" height="120%"><feGaussianBlur stdDeviation="2.2"/></filter>
<filter color-interpolation-filters="sRGB" id="db4" x="-20%" y="-20%" width="140%" height="140%"><feGaussianBlur stdDeviation="4.5"/></filter>
<radialGradient id="gSph" cx="0.38" cy="0.3" r="0.8"><stop offset="0" stop-color="#d6d6da"/><stop offset="0.45" stop-color="#b4b4b9"/><stop offset="0.85" stop-color="#8b8b91"/><stop offset="1" stop-color="#77777d"/></radialGradient>
<linearGradient id="gCloth" x1="0" y1="0" x2="1" y2="1"><stop offset="0" stop-color="#c0c0c5"/><stop offset="0.5" stop-color="#b3b3b9"/><stop offset="1" stop-color="#a7a7ad"/></linearGradient>
<clipPath id="clothclip"><path id="clothp" d="M555 575.6L589 558L613.8 535.7L625.7 537.7L652 516L679.6 495.8L705.5 493.8L713.4 487.8L751.3 489.8L765.3 497.8L781.2 514.8L799.2 513.4L843 546.7L812 560L789.2 569.6L783.2 579.6L777.2 591.5L759.3 605.5L739.4 613.4L719.4 615.4L711.5 623.4L698 640L683.5 654.3L668 640L651.6 624.4L623.7 623.4L605.8 613.4L599.8 603.5L589.8 590.5L574 584Z"/></clipPath>
</defs>
<g fill="none" stroke-linecap="round" stroke-linejoin="round">
<path d="M626 700C640 706 660 712 690 716C720 722 750 716 776 700C790 690 796 676 790 662" stroke="#8e8e94" stroke-width="0.8"/>
<path d="M652 704C664 700 676 706 690 712M660 690L672 684L680 694L668 700ZM664 700C672 710 684 716 700 718" stroke="#8a8a90" stroke-width="0.8"/>
<path d="M740 690C752 694 768 688 778 676C784 668 782 656 776 650M746 686L770 674L776 660" stroke="#8e8e94" stroke-width="0.8"/>
<path d="M716 640L722 650L716 660M726 662L738 658" stroke="#77777d" stroke-width="1"/>
</g>
<g fill="none" stroke-linecap="round"><path d="M651.4 689.5L689.8 654.7M658.4 683.7L673.5 651.2M757.2 633.7L749.1 655.8M732.8 646.5L740.9 645.3M729.3 667.4L739.8 674.4" stroke="#6a6a70" stroke-width="3.4"/><path d="M651.4 689.5L689.8 654.7M658.4 683.7L673.5 651.2M757.2 633.7L749.1 655.8M732.8 646.5L740.9 645.3M729.3 667.4L739.8 674.4" stroke="#c2c2c7" stroke-width="1.8"/><path d="M703.1 695.3L745.6 679.1M745.6 679.1L749.1 674.4M703.1 695.3L685.1 655.8M685.1 655.8L703.7 660.5M703.7 660.5L703.1 695.3M706 683.7L743.3 667.4M721.2 624.4L750.2 643M745.6 679.1L746.7 689.5M689.8 654.7L701.4 648.8" stroke="#66666c" stroke-width="4.6"/><path d="M703.1 695.3L745.6 679.1M745.6 679.1L749.1 674.4M703.1 695.3L685.1 655.8M685.1 655.8L703.7 660.5M703.7 660.5L703.1 695.3M706 683.7L743.3 667.4M721.2 624.4L750.2 643M745.6 679.1L746.7 689.5M689.8 654.7L701.4 648.8" stroke="#b4b4ba" stroke-width="2.8"/><path d="M703.1 695.3L703.1 728.5M752 622.7L752 675.3M675.8 653.5L675.8 676.2" stroke="#5e5e64" stroke-width="6.6"/><path d="M703.1 695.3L703.1 728.5M752 622.7L752 675.3M675.8 653.5L675.8 676.2" stroke="#8f8f95" stroke-width="4.6"/><path d="M701.4 696.5L701.4 727.9M750.5 623.3L750.5 674.4" stroke="#b9b9be" stroke-width="1.6"/></g>
<g filter="url(#db1)"><path d="M646 650C634 660 630 680 638 692C650 694 660 682 664 664C666 654 658 646 646 650Z" fill="#85858b" stroke="#a8a8ad" stroke-width="1.6"/><path d="M646 660C640 668 638 680 642 686C650 682 656 672 658 662Z" fill="#5e5e64"/><path d="M631 690C640 696 652 692 658 684" fill="none" stroke="#9a9aa0" stroke-width="2.4"/></g>
<path d="M775 560L784 572V606L760 618L740 624L720 628L700 650L690 640L705 610L740 585Z" fill="#54555e"/>
<path d="M664 470L700 448L724 478L708 497L680 499L664 494Z" fill="#5a5b65"/>
<g filter="url(#db1)"><use href="#clothp" fill="url(#gCloth)"/></g>
<g clip-path="url(#clothclip)"><g filter="url(#db2)" fill="none" stroke-linecap="round">
<path d="M600 562C640 552 700 548 760 522" stroke="#c3c3c8" stroke-width="10" opacity="0.8"/>
<path d="M640 612C670 604 700 612 740 600" stroke="#bebec3" stroke-width="9" opacity="0.7"/>
<path d="M700 520C720 502 745 500 770 512" stroke="#c6c6ca" stroke-width="9" opacity="0.7"/>
<path d="M590 590C610 598 640 606 660 620" stroke="#c0c0c5" stroke-width="8" opacity="0.6"/>
<path d="M733.6 544C736 556 734 566 730.8 574" stroke="#8a8a90" stroke-width="7" opacity="0.85"/>
<path d="M774 530C776 542 772 552 768 560" stroke="#8e8e94" stroke-width="6" opacity="0.8"/>
<path d="M790 520L838 548L800 562" stroke="#a0a0a6" stroke-width="8" opacity="0.6"/>
<path d="M670 628L684 650L700 630" stroke="#9c9ca2" stroke-width="6" opacity="0.7"/>
</g><g filter="url(#db1)" fill="none" stroke-linecap="round">
<path d="M612.8 583.3L625.3 577.8" stroke="#77777e" stroke-width="2"/>
<path d="M629.4 584.7C645 582 660 576 671.1 569.4" stroke="#74747b" stroke-width="2.6"/>
<path d="M655.8 595.8C665 598 674 598 682.2 597.2L698.9 591.7" stroke="#787880" stroke-width="2.4"/>
<path d="M689.2 608.3L700.3 597.2L712.8 604.2" stroke="#74747b" stroke-width="2.4"/>
<path d="M690 520C700 524 708 530 714 536" stroke="#8a8a90" stroke-width="2"/>
<path d="M640 548C650 556 664 560 680 556" stroke="#8f8f95" stroke-width="2"/>
</g></g>
<use href="#clothp" fill="none" stroke="#6e6e74" stroke-width="0.6" opacity="0.8"/>
<path d="M660 468L690 440L742.6 466L754.6 467.4V486L742 480L716 490L705.5 493.8L682 485Z" fill="#5a5b64"/>
<path d="M742.6 465.5L754.6 467.4V489L742.6 484Z" fill="#51525b"/>
<path d="M700 480L742 464L755 468V489L768 500L751.3 491L713.4 489L705.5 495Z" fill="#5b5c65"/>
<defs><linearGradient id="gPup" x1="0" y1="0" x2="1" y2="1"><stop offset="0" stop-color="#bcbcc1"/><stop offset="0.55" stop-color="#a9a9ae"/><stop offset="1" stop-color="#8e8e94"/></linearGradient><clipPath id="pupclip"><path d="M623.4 460C622.4 457.7 623.5 457.7 625.1 456.5C626.8 455.3 632.3 454.8 633.3 453C634.2 451.3 631.1 448.2 630.9 446C630.7 443.9 630.7 442.6 632.1 440.2C633.4 437.9 636.4 435 639.1 432.1C641.8 429.2 645.1 426.5 648.4 422.8C651.7 419.1 656.1 413.5 658.8 410C661.6 406.5 661.9 403.4 664.7 401.9C667.4 400.3 670.7 400.5 675.1 400.7C679.6 400.9 687.5 403.8 691.4 403C695.3 402.2 696.6 398.4 698.4 396C700.1 393.7 700.1 391.8 701.9 389.1C703.6 386.4 705.7 382.1 708.8 379.8C711.9 377.4 716.6 375.3 720.5 375.1C724.3 374.9 729 376.5 732.1 378.6C735.2 380.7 736.9 386.7 739.1 387.9C741.2 389.1 742.8 386.4 744.9 385.6C747 384.8 749.1 382.7 751.9 383.3C754.6 383.8 758.4 386.4 761.2 389.1C763.9 391.8 765.8 395.3 768.1 399.5C770.5 403.8 773.8 410.4 775.1 414.7C776.5 418.9 776.7 421.8 776.3 425.1C775.9 428.4 773 431.7 772.8 434.4C772.6 437.1 775.5 439.1 775.1 441.4C774.7 443.7 772.8 445.9 770.5 448.4C768.1 450.9 764.7 454.4 761.2 456.5C757.7 458.6 753 458.6 749.5 461.2C746 463.7 743.1 468.3 740.2 471.6C737.3 474.9 735.4 478.5 732.1 480.9C728.8 483.4 725.3 485.6 720.5 486.2C715.6 486.7 707.9 484.9 703 484.4C698.2 483.9 696 483.8 691.4 483.3C686.7 482.7 680 481.9 675.1 480.9C670.3 480 664.5 479.4 662.3 477.4C660.2 475.5 663.3 470.9 662.3 469.3C661.4 467.8 659.4 468 656.5 468.1C653.6 468.2 649.1 469.5 644.9 469.9C640.6 470.3 634.5 472.1 630.9 470.5C627.3 468.8 624.3 462.3 623.4 460Z"/></clipPath><radialGradient id="gSph2" cx="0.4" cy="0.32" r="0.75"><stop offset="0" stop-color="#cfcfd3"/><stop offset="0.45" stop-color="#b0b0b5"/><stop offset="0.85" stop-color="#85858b"/><stop offset="1" stop-color="#707076"/></radialGradient></defs>
<g filter="url(#db1)">
<path d="M623.4 460C622.4 457.7 623.5 457.7 625.1 456.5C626.8 455.3 632.3 454.8 633.3 453C634.2 451.3 631.1 448.2 630.9 446C630.7 443.9 630.7 442.6 632.1 440.2C633.4 437.9 636.4 435 639.1 432.1C641.8 429.2 645.1 426.5 648.4 422.8C651.7 419.1 656.1 413.5 658.8 410C661.6 406.5 661.9 403.4 664.7 401.9C667.4 400.3 670.7 400.5 675.1 400.7C679.6 400.9 687.5 403.8 691.4 403C695.3 402.2 696.6 398.4 698.4 396C700.1 393.7 700.1 391.8 701.9 389.1C703.6 386.4 705.7 382.1 708.8 379.8C711.9 377.4 716.6 375.3 720.5 375.1C724.3 374.9 729 376.5 732.1 378.6C735.2 380.7 736.9 386.7 739.1 387.9C741.2 389.1 742.8 386.4 744.9 385.6C747 384.8 749.1 382.7 751.9 383.3C754.6 383.8 758.4 386.4 761.2 389.1C763.9 391.8 765.8 395.3 768.1 399.5C770.5 403.8 773.8 410.4 775.1 414.7C776.5 418.9 776.7 421.8 776.3 425.1C775.9 428.4 773 431.7 772.8 434.4C772.6 437.1 775.5 439.1 775.1 441.4C774.7 443.7 772.8 445.9 770.5 448.4C768.1 450.9 764.7 454.4 761.2 456.5C757.7 458.6 753 458.6 749.5 461.2C746 463.7 743.1 468.3 740.2 471.6C737.3 474.9 735.4 478.5 732.1 480.9C728.8 483.4 725.3 485.6 720.5 486.2C715.6 486.7 707.9 484.9 703 484.4C698.2 483.9 696 483.8 691.4 483.3C686.7 482.7 680 481.9 675.1 480.9C670.3 480 664.5 479.4 662.3 477.4C660.2 475.5 663.3 470.9 662.3 469.3C661.4 467.8 659.4 468 656.5 468.1C653.6 468.2 649.1 469.5 644.9 469.9C640.6 470.3 634.5 472.1 630.9 470.5C627.3 468.8 624.3 462.3 623.4 460Z" fill="url(#gPup)" stroke="#66666c" stroke-width="0.9"/>
<g clip-path="url(#pupclip)">
<path d="M642.6 429.8C645.7 426.3 653.8 423.2 656.5 425.1C659.2 427.1 660.2 437.5 658.8 441.4C657.5 445.3 651.9 447.6 648.4 448.4C644.9 449.1 638.9 449.1 637.9 446C636.9 442.9 639.5 433.3 642.6 429.8Z" fill="#5c5c63" opacity="0.9"/>
<path d="M675.1 414.7C675.9 410.8 680.5 408.6 682.1 411.2C683.6 413.7 685.2 425.9 684.4 429.8C683.6 433.6 679 436.9 677.4 434.4C675.9 431.9 674.3 418.5 675.1 414.7Z" fill="#5c5c63" opacity="0.9"/>
<path d="M700.7 408.8C701.3 406.5 704.2 405.5 706.5 406.5C708.8 407.5 714.1 411.6 714.7 414.7C715.2 417.8 711.9 424.1 710 425.1C708.1 426.1 704.6 423.2 703 420.5C701.5 417.8 700.1 411.2 700.7 408.8Z" fill="#5c5c63" opacity="0.9"/>
<path d="M721.6 408.8C722.4 406.9 729 403.6 730.9 404.2C732.9 404.8 734 410.4 733.3 412.3C732.5 414.3 728.2 416.4 726.3 415.8C724.3 415.2 720.9 410.8 721.6 408.8Z" fill="#5c5c63" opacity="0.9"/>
<path d="M707.7 425.1C708.8 423.2 718.9 422 721.6 422.8C724.3 423.6 725.1 427.8 724 429.8C722.8 431.7 717.4 435.2 714.7 434.4C711.9 433.6 706.5 427.1 707.7 425.1Z" fill="#5c5c63" opacity="0.9"/>
<path d="M764.7 432.1C765.6 429.8 771.2 428.2 772.8 429.8C774.3 431.3 774.9 439.1 774 441.4C773 443.7 768.5 445.3 767 443.7C765.4 442.2 763.7 434.4 764.7 432.1Z" fill="#5c5c63" opacity="0.9"/>
<ellipse cx="644.9" cy="462.3" rx="22.1" ry="7.6" transform="rotate(-8 644.9 462.3)" fill="url(#gSph2)" opacity="1" stroke="#707076" stroke-width="0.6"/>
<ellipse cx="664.7" cy="425.1" rx="11" ry="25.6" transform="rotate(12 664.7 425.1)" fill="url(#gSph2)" opacity="1" stroke="#707076" stroke-width="0.6"/>
<ellipse cx="690.2" cy="434.4" rx="17.4" ry="26.7" transform="rotate(-28 690.2 434.4)" fill="url(#gSph2)" opacity="1" stroke="#707076" stroke-width="0.6"/>
<ellipse cx="755.3" cy="406.5" rx="17.4" ry="24.4" transform="rotate(-20 755.3 406.5)" fill="url(#gSph2)" opacity="1" stroke="#707076" stroke-width="0.6"/>
<ellipse cx="743.7" cy="425.1" rx="22.1" ry="11" transform="rotate(-28 743.7 425.1)" fill="url(#gSph2)" opacity="1" stroke="#707076" stroke-width="0.6"/>
<ellipse cx="714.7" cy="469.3" rx="26.7" ry="16.3" transform="rotate(-4 714.7 469.3)" fill="url(#gSph2)" opacity="1" stroke="#707076" stroke-width="0.6"/>
<ellipse cx="712.3" cy="451.9" rx="23.3" ry="21.5" transform="rotate(0 712.3 451.9)" fill="url(#gSph2)" opacity="1" stroke="#707076" stroke-width="0.6"/>
<ellipse cx="720.5" cy="393.7" rx="19.5" ry="18" transform="rotate(0 720.5 393.7)" fill="url(#gSph2)" opacity="1" stroke="#707076" stroke-width="0.6"/>
<ellipse cx="721.6" cy="414.7" rx="12.8" ry="5.8" transform="rotate(-25 721.6 414.7)" fill="#a4a4aa" opacity="1" stroke="#707076" stroke-width="0.6"/>
<path d="M705.3 398.4C708.8 404.2 714.7 405.3 719.3 401.9" fill="none" stroke="#77777d" stroke-width="0.9"/>
</g>
<g fill="none" stroke-linecap="round"><path d="M698.4 397.2C697.2 399.1 695.3 406.5 691.4 408.8C687.5 411.2 680.5 410 675.1 411.2C669.7 412.3 663.9 412.7 658.8 415.8C653.8 418.9 648.8 425.1 644.9 429.8C641 434.4 636.4 440.2 635.6 443.7C634.8 447.2 636.7 449.9 640.2 450.7C643.7 451.5 653.8 448.8 656.5 448.4M665.8 401.9C663.9 404 657.9 409.6 654.2 414.7C650.5 419.7 645.3 427.6 643.7 432.1C642.2 436.6 644.7 439.8 644.9 441.4M719.3 410C718.5 412.5 717.8 421.8 714.7 425.1C711.6 428.4 705 427.1 700.7 429.8C696.4 432.5 691.8 436.4 689.1 441.4C686.4 446.4 683.6 453.4 684.4 460C685.2 466.6 692.2 477.4 693.7 480.9M700.7 429.8C703.4 429.4 711.6 425.9 717 427.4C722.4 429 729.8 434.4 733.3 439.1C736.7 443.7 737.9 449.9 737.9 455.3C737.9 460.8 736.4 467 733.3 471.6C730.2 476.3 724.7 481.5 719.3 483.3C713.9 485 707.3 482.9 700.7 482.1C694.1 481.3 685.8 479.4 679.8 478.6C673.8 477.8 667.2 479 664.7 477.4C662.1 475.9 662.9 472.2 664.7 469.3C666.4 466.4 673.4 461.6 675.1 460M747.2 387.9C749.5 389.1 757.3 391.4 761.2 394.9C765 398.4 768.5 403.8 770.5 408.8C772.4 413.9 772.8 420.1 772.8 425.1C772.8 430.2 772.4 434.8 770.5 439.1C768.5 443.3 765 447.6 761.2 450.7C757.3 453.8 749.5 456.5 747.2 457.7M775.1 429.8C774.7 432.1 775.1 439.8 772.8 443.7C770.5 447.6 763.1 451.5 761.2 453M675.1 450.7C676.3 453 679.4 460.4 682.1 464.7C684.8 468.9 689.8 474.3 691.4 476.3" stroke="#55555b" stroke-width="3.9"/><path d="M698.4 397.2C697.2 399.1 695.3 406.5 691.4 408.8C687.5 411.2 680.5 410 675.1 411.2C669.7 412.3 663.9 412.7 658.8 415.8C653.8 418.9 648.8 425.1 644.9 429.8C641 434.4 636.4 440.2 635.6 443.7C634.8 447.2 636.7 449.9 640.2 450.7C643.7 451.5 653.8 448.8 656.5 448.4M665.8 401.9C663.9 404 657.9 409.6 654.2 414.7C650.5 419.7 645.3 427.6 643.7 432.1C642.2 436.6 644.7 439.8 644.9 441.4M719.3 410C718.5 412.5 717.8 421.8 714.7 425.1C711.6 428.4 705 427.1 700.7 429.8C696.4 432.5 691.8 436.4 689.1 441.4C686.4 446.4 683.6 453.4 684.4 460C685.2 466.6 692.2 477.4 693.7 480.9M700.7 429.8C703.4 429.4 711.6 425.9 717 427.4C722.4 429 729.8 434.4 733.3 439.1C736.7 443.7 737.9 449.9 737.9 455.3C737.9 460.8 736.4 467 733.3 471.6C730.2 476.3 724.7 481.5 719.3 483.3C713.9 485 707.3 482.9 700.7 482.1C694.1 481.3 685.8 479.4 679.8 478.6C673.8 477.8 667.2 479 664.7 477.4C662.1 475.9 662.9 472.2 664.7 469.3C666.4 466.4 673.4 461.6 675.1 460M747.2 387.9C749.5 389.1 757.3 391.4 761.2 394.9C765 398.4 768.5 403.8 770.5 408.8C772.4 413.9 772.8 420.1 772.8 425.1C772.8 430.2 772.4 434.8 770.5 439.1C768.5 443.3 765 447.6 761.2 450.7C757.3 453.8 749.5 456.5 747.2 457.7M775.1 429.8C774.7 432.1 775.1 439.8 772.8 443.7C770.5 447.6 763.1 451.5 761.2 453M675.1 450.7C676.3 453 679.4 460.4 682.1 464.7C684.8 468.9 689.8 474.3 691.4 476.3" stroke="#b6b6bb" stroke-width="2"/></g>
</g>
<path d="M453.7 429.8L681.6 286.1L800.4 360.6L805.9 364.2L811 367.9L815.9 371.9L820.4 375.9L824.7 380.1L828.6 384.4L832.1 388.9L835.3 393.4L838.2 398L840.7 402.8L842.8 407.5L844.5 412.4L845.9 417.3L846.8 422.2L847.4 427.2L847.6 432.2L847.4 437.1L846.8 442.1L845.9 447L844.5 451.9L842.8 456.8L840.7 461.6L838.2 466.3L835.3 471L832.1 475.5L828.6 480L824.7 484.3L820.4 488.5L815.9 492.6L811 496.5L805.9 500.3L800.4 503.9L794.7 507.3L788.7 510.6L782.4 513.7L776 516.5L769.3 519.2L762.4 521.7L755.4 523.9L748.1 525.9L740.7 527.7L733.2 529.3L725.6 530.7L717.9 531.8L710.1 532.6L702.2 533.2L694.4 533.6L686.5 533.8L678.5 533.7L670.7 533.3L662.8 532.7L655 531.9L647.3 530.8L639.7 529.5L632.2 527.9L624.8 526.2L617.5 524.2L610.5 521.9L603.6 519.5L596.9 516.8L590.5 514L584.2 510.9L578.2 507.7L572.5 504.3ZM453.7 429.8L453.7 473.5M453.7 473.5L526.2 519V656.5M526.2 656.5L572.5 685.5L572.5 685.5L578.2 688.9L584.2 692.1L590.5 695.2L596.9 698L603.6 700.7L610.5 703.1L617.5 705.4L624.8 707.4L632.2 709.1L639.7 710.7L647.3 712L655 713.1L662.8 713.9L670.7 714.5L678.5 714.9L686.5 715L694.4 714.8L702.2 714.4L710.1 713.8L717.9 713L725.6 711.9L733.2 710.5L740.7 708.9L748.1 707.1L755.4 705.1L762.4 702.9L769.3 700.4L776 697.7L782.4 694.9L788.7 691.8L794.7 688.5L800.4 685.1L805.9 681.5L811 677.7L815.9 673.8L820.4 669.7L824.7 665.5L828.6 661.2L832.1 656.7L835.3 652.2L838.2 647.5L840.7 642.8L842.8 638L844.5 633.1L845.9 628.2L846.8 623.3L847.4 618.3L847.6 613.4M847.6 432.2V613.4" fill="none" stroke="#3c3c40" stroke-width="0.75"/>
<g fill="none"><path d="M453.7 473.5V566M681.4 287V399M847.4 617V702" stroke="#4a4a4e" stroke-width="0.9" stroke-dasharray="5.5 4.5"/>
<path d="M623.8 459V700M776.2 436V646" stroke="#3a3a40" stroke-width="1.7" stroke-dasharray="7.5 5"/><path d="M719.6 486V716" stroke="#4a4a50" stroke-width="1.2" stroke-dasharray="7 5"/></g>
<path d="M813 519.8L833 506" fill="none" stroke="#fff" stroke-width="2.4" stroke-dasharray="5 3.4"/><path d="M824 503.6L835.6 504.4L831.4 516" fill="none" stroke="#fff" stroke-width="2.4"/>
<path d="M758.6 411.2H900" stroke="#9a9a9e" stroke-width="0.8" fill="none"/>
<circle cx="758.6" cy="411.2" r="2.1" fill="#111"/>
<path d="M736.4 506.4H900" stroke="#4a4a4e" stroke-width="0.8" fill="none"/>
<circle cx="736.4" cy="506.4" r="2.1" fill="#111"/>
<path d="M577.1 546.3H900" stroke="#4a4a4e" stroke-width="0.8" fill="none"/>
<circle cx="577.1" cy="546.3" r="2.1" fill="#111"/>
<path d="M586.3 608.9H900" stroke="#6a6a6e" stroke-width="0.8" fill="none"/>
<circle cx="586.3" cy="608.9" r="2.1" fill="#111"/>
<path d="M748.9 658.8H900" stroke="#4a4a4e" stroke-width="0.8" fill="none"/>
<circle cx="748.9" cy="658.8" r="2.1" fill="#111"/>
<path d="M772.3 747.2H900" stroke="#3a3a3e" stroke-width="0.8" fill="none"/>
<circle cx="772.3" cy="747.2" r="2.1" fill="#111"/>
<path d="M785.6 825.8H900" stroke="#3a3a3e" stroke-width="0.8" fill="none"/>
<circle cx="785.6" cy="825.8" r="2.1" fill="#111"/>
<path d="M814.6 868.6H900" stroke="#4a4a4e" stroke-width="0.8" fill="none"/>
<circle cx="814.6" cy="868.6" r="2.1" fill="#111"/>
<defs><filter color-interpolation-filters="sRGB" id="db0"><feGaussianBlur stdDeviation="0.35"/></filter></defs>
<g filter="url(#db0)"><text x="905.8" y="415.3" font-family="Liberation Sans, Noto Sans CJK SC, sans-serif" font-weight="bold" font-size="10.4" fill="#1d1d20">人偶主体</text><text x="905.8" y="428.6" font-family="Liberation Sans, sans-serif" font-size="9.9" fill="#2a2a2e" stroke="#2a2a2e" stroke-width="0.2">Puppet Body</text><text x="905.8" y="509.4" font-family="Liberation Sans, sans-serif" font-weight="bold" font-size="10.4" fill="#1d1d20">PVC</text><text x="927.2" y="509.4" font-family="Liberation Sans, Noto Sans CJK SC, sans-serif" font-weight="bold" font-size="10.4" fill="#1d1d20">吸塑膜</text><text x="905.8" y="522" font-family="Liberation Sans, sans-serif" font-size="9.9" fill="#2a2a2e" stroke="#2a2a2e" stroke-width="0.2">PVC Blister Film</text><text x="905.8" y="551.2" font-family="Liberation Sans, Noto Sans CJK SC, sans-serif" font-weight="bold" font-size="10.4" fill="#1d1d20">展览导则</text><text x="905.8" y="564.4" font-family="Liberation Sans, sans-serif" font-size="9.9" fill="#2a2a2e" stroke="#2a2a2e" stroke-width="0.2">Exhibition Guidelines</text><text x="905.8" y="612.3" font-family="Liberation Sans, Noto Sans CJK SC, sans-serif" font-weight="bold" font-size="10.4" fill="#1d1d20">展厅</text><text x="905.8" y="625.4" font-family="Liberation Sans, sans-serif" font-size="9.9" fill="#2a2a2e" stroke="#2a2a2e" stroke-width="0.2">Exhibition Hall</text><text x="905.8" y="662.1" font-family="Liberation Sans, Noto Sans CJK SC, sans-serif" font-weight="bold" font-size="10.4" fill="#1d1d20">人偶钢结构</text><text x="905.8" y="675.2" font-family="Liberation Sans, sans-serif" font-size="9.9" fill="#2a2a2e" stroke="#2a2a2e" stroke-width="0.2">Puppet Steel Structure</text><text x="905.8" y="751.3" font-family="Liberation Sans, Noto Sans CJK SC, sans-serif" font-weight="bold" font-size="10.4" fill="#1d1d20">发光玻璃地面</text><text x="905.8" y="764.3" font-family="Liberation Sans, sans-serif" font-size="9.9" fill="#2a2a2e" stroke="#2a2a2e" stroke-width="0.2">Luminous Glass Floor</text><text x="905.8" y="830" font-family="Liberation Sans, sans-serif" font-weight="bold" font-size="10.4" fill="#1d1d20">LED</text><text x="926.6" y="830" font-family="Liberation Sans, Noto Sans CJK SC, sans-serif" font-weight="bold" font-size="10.4" fill="#1d1d20">灯带</text><text x="905.8" y="843.2" font-family="Liberation Sans, sans-serif" font-size="9.9" fill="#2a2a2e" stroke="#2a2a2e" stroke-width="0.2">LED Light Belt</text><text x="905.8" y="871.6" font-family="Liberation Sans, Noto Sans CJK SC, sans-serif" font-weight="bold" font-size="10.4" fill="#1d1d20">发光地面钢结构</text><text x="905.8" y="884.6" font-family="Liberation Sans, sans-serif" font-size="9.9" fill="#2a2a2e" stroke="#2a2a2e" stroke-width="0.2">Luminous Floor Steel Structure</text></g>
</g></g>
</svg>
<svg class="ov" viewBox="0 0 1728 1204" aria-label="participants">
<defs>
  <linearGradient id="sbg" x1="0" y1="0" x2="1" y2="0">
    <stop offset="0" stop-color="#4e5054"/><stop offset="0.25" stop-color="#424447"/><stop offset="0.5" stop-color="#36373a"/><stop offset="0.75" stop-color="#2b2c2e"/><stop offset="1" stop-color="#222325"/>
  </linearGradient>
  <linearGradient id="sbv" x1="0" y1="0" x2="0" y2="1">
    <stop offset="0" stop-color="#000" stop-opacity="0.86"/><stop offset="0.068" stop-color="#000" stop-opacity="0.68"/><stop offset="0.137" stop-color="#000" stop-opacity="0.42"/><stop offset="0.195" stop-color="#000" stop-opacity="0.15"/><stop offset="0.235" stop-color="#000" stop-opacity="0"/>
    <stop offset="0.80" stop-color="#000" stop-opacity="0"/><stop offset="0.88" stop-color="#000" stop-opacity="0.3"/><stop offset="0.94" stop-color="#000" stop-opacity="0.6"/><stop offset="1" stop-color="#000" stop-opacity="0.86"/>
  </linearGradient>
  <linearGradient id="tbd" gradientUnits="userSpaceOnUse" x1="1410" y1="0" x2="1712" y2="0"><stop offset="0" stop-color="#585a5e"/><stop offset="1" stop-color="#3a3b3e"/></linearGradient>
  <linearGradient id="t5g" x1="0" y1="0" x2="0" y2="1"><stop offset="0" stop-color="#1f2022"/><stop offset="1" stop-color="#121314"/></linearGradient>
  <clipPath id="av3"><circle cx="1560.5" cy="618.4" r="41.4"/></clipPath>
  <clipPath id="av4"><circle cx="1560.5" cy="802.6" r="41.4"/></clipPath>
  <clipPath id="av5"><circle cx="1560.5" cy="986.8" r="41.4"/></clipPath>
  <clipPath id="camclip"><rect x="1412.3" y="177" width="297.5" height="165.3"/></clipPath>
  <filter color-interpolation-filters="sRGB" id="b1" x="-10%" y="-10%" width="120%" height="120%"><feGaussianBlur stdDeviation="0.8"/></filter>
  <filter color-interpolation-filters="sRGB" id="b2" x="-10%" y="-10%" width="120%" height="120%"><feGaussianBlur stdDeviation="2"/></filter>
  <filter color-interpolation-filters="sRGB" id="b4" x="-20%" y="-20%" width="140%" height="140%"><feGaussianBlur stdDeviation="4"/></filter>
  <filter color-interpolation-filters="sRGB" id="b7" x="-30%" y="-30%" width="160%" height="160%"><feGaussianBlur stdDeviation="7"/></filter>
  <g id="micoff">
    <rect x="-4.3" y="-10.6" width="8.6" height="15" rx="4.3" fill="#f0f0f0"/>
    <path d="M-8.2 0.4V1A8.2 8.2 0 0 0 8.2 1V0.4M0 9.2V10.9" fill="none" stroke="#f0f0f0" stroke-width="1.8" stroke-linecap="round"/>
    <path d="M-8.8 8.4L8.8 -8.5" stroke="#111213" stroke-width="4"/>
    <path d="M-8.8 8.4L8.8 -8.5" stroke="#ea4a40" stroke-width="2" stroke-linecap="round"/>
  </g>
</defs>
<rect x="1397" y="100.4" width="327.3" height="1024" fill="url(#sbg)"/>
<rect x="1397" y="100.4" width="327.3" height="1024" fill="url(#sbv)"/>
<rect x="1397" y="100.4" width="4.2" height="1024" fill="#000" opacity="0.38"/>
<rect x="1397" y="100.4" width="327.3" height="1" fill="#3a3a3b"/>
<!-- arrows -->
<path d="M1547.1 165.7L1560.6 148.6L1574 165.7Z" fill="#8f8f8f"/>
<path d="M1547.1 1097L1574 1097L1560.6 1113.2Z" fill="#ffffff"/>
<path d="M1382.6 622.6L1389.4 630.6L1382.6 638.6" fill="none" stroke="#8a8a8a" stroke-width="1.6"/>
<!-- tile 1 (camera) -->
<rect x="1409.4" y="174.2" width="303.4" height="171.4" rx="4" fill="#050505" stroke="#0c9f56" stroke-width="1.15"/>
<g id="cam" clip-path="url(#camclip)"><g transform="translate(1412.3 177) scale(0.18228) translate(-40 -38)">
<defs>
  <linearGradient id="cwall" x1="0" y1="0" x2="1" y2="0"><stop offset="0" stop-color="#1c2628"/><stop offset="0.09" stop-color="#283234"/><stop offset="0.1" stop-color="#3b4648"/><stop offset="0.2" stop-color="#465253"/><stop offset="0.285" stop-color="#434f52"/><stop offset="0.295" stop-color="#2f3b41"/><stop offset="0.4" stop-color="#34414a"/><stop offset="1" stop-color="#46535b"/></linearGradient>
  <linearGradient id="cdark" x1="0" y1="0" x2="0" y2="1"><stop offset="0" stop-color="#000" stop-opacity="0.35"/><stop offset="0.35" stop-color="#000" stop-opacity="0.05"/><stop offset="1" stop-color="#000" stop-opacity="0.35"/></linearGradient>
  <linearGradient id="cwood" x1="0" y1="0" x2="1" y2="0"><stop offset="0" stop-color="#9c8b6c"/><stop offset="0.1" stop-color="#c4b292"/><stop offset="0.55" stop-color="#cfc0a3"/><stop offset="1" stop-color="#dcd0b6"/></linearGradient>
  <radialGradient id="cface" cx="0.62" cy="0.3" r="0.75"><stop offset="0" stop-color="#f3efe8"/><stop offset="0.3" stop-color="#d9c9bb"/><stop offset="0.6" stop-color="#b39d8e"/><stop offset="1" stop-color="#6a5a51"/></radialGradient>
  <linearGradient id="cleft" x1="0" y1="0" x2="1" y2="0"><stop offset="0" stop-color="#05080a" stop-opacity="0.42"/><stop offset="0.75" stop-color="#05080a" stop-opacity="0.3"/><stop offset="1" stop-color="#05080a" stop-opacity="0"/></linearGradient>
  <filter color-interpolation-filters="sRGB" id="cb3"><feGaussianBlur stdDeviation="5"/></filter>
  <filter color-interpolation-filters="sRGB" id="cb8"><feGaussianBlur stdDeviation="8"/></filter>
  <filter color-interpolation-filters="sRGB" id="cb16"><feGaussianBlur stdDeviation="20"/></filter>
</defs>
<rect x="30" y="28" width="1660" height="930" fill="url(#cwall)"/>
<g filter="url(#cb3)">
  <!-- far wall bits -->
  <rect x="500" y="28" width="22" height="670" fill="#56625f"/>
  <rect x="670" y="28" width="110" height="300" fill="#4a4b40"/>
  <rect x="700" y="28" width="40" height="300" fill="#5a594c"/>
  <rect x="185" y="28" width="14" height="670" fill="#4a5658"/>
  <rect x="520" y="440" width="200" height="100" fill="#3c4a50"/>
  <rect x="560" y="380" width="100" height="70" fill="#2a3236"/>
  <!-- door handle -->
  <rect x="215" y="235" width="17" height="72" rx="5" fill="#c3caca"/>
  <rect x="228" y="262" width="40" height="11" rx="4" fill="#aeb6b6"/>
  <!-- hanging jacket -->
  <path d="M235 28H490V150L452 172L442 300L400 326L350 302L330 172L300 160L282 172L240 132Z" fill="#0a0c0d"/>
  <path d="M240 40H290V160L262 150Z" fill="#2b3338"/>
  <!-- left cabinet and lamp -->
  <rect x="30" y="468" width="132" height="24" fill="#6d7879"/>
  <rect x="30" y="492" width="128" height="260" fill="#2d383e"/>
  <rect x="30" y="600" width="128" height="8" fill="#28323a"/>
  <path d="M62 250H100V280H92V430H110V450H55V430H75V280H62Z" fill="#161c1e"/>
  <path d="M100 300C150 330 140 420 120 450" fill="none" stroke="#222a2c" stroke-width="7"/>
  <!-- floor -->
  <path d="M30 700H300V820H30Z" fill="#2a2622"/>
  <path d="M30 740H220L200 960H30Z" fill="#1d1b19"/>
  <!-- right side -->
  <rect x="1260" y="28" width="430" height="290" fill="#8292a0"/>
  <path d="M1330 28H1500V122L1342 142Z" fill="#8d7c5c"/>
  <path d="M1400 40L1468 34L1476 118L1412 126Z" fill="#c9c5b9"/>
  <rect x="1500" y="28" width="190" height="150" fill="#97a7b4"/>
  <rect x="1310" y="176" width="380" height="116" fill="#cfc4c7"/>
  <rect x="1310" y="176" width="380" height="16" fill="#e4dfe0"/>
  <rect x="1310" y="236" width="380" height="6" fill="#b5aaae"/>
  <rect x="1300" y="296" width="330" height="80" fill="#131518"/>
  <rect x="1600" y="290" width="90" height="20" fill="#9fb2c0"/>
  <rect x="1230" y="370" width="180" height="460" fill="#23243a"/>
  <rect x="1285" y="380" width="24" height="420" fill="#55557a"/>
  <rect x="1366" y="420" width="18" height="400" fill="#8f90a8"/>
  <rect x="1320" y="450" width="28" height="130" fill="#c2aa3c"/>
  <rect x="1330" y="600" width="30" height="200" fill="#3a3a5a"/>
  <rect x="1400" y="368" width="290" height="600" fill="url(#cwood)"/>
  <rect x="1536" y="368" width="8" height="600" fill="#b3a282" opacity="0.7"/>
  <rect x="1596" y="368" width="6" height="600" fill="#b9a98a" opacity="0.7"/>
  <rect x="1652" y="300" width="40" height="668" fill="#a9bac3"/>
  <!-- body -->
  <path d="M205 960L225 800L292 640L402 566L560 530L662 478L730 560L765 760L832 884L1000 762L1182 590L1255 652L1402 850L1462 960Z" fill="#0a0b0c"/>
  <path d="M300 640C380 570 480 545 600 525" fill="none" stroke="#252b2e" stroke-width="26" opacity="0.9"/>
  <path d="M1440 960L1462 900L1520 950V960Z" fill="#c9b394"/>
</g>
<!-- face (authored in 7.164x zoom coords of region 1520,176) -->
<g transform="translate(630.9 32.9) scale(0.7658)">
<defs>
  <clipPath id="fcl"><path id="fcp" d="M60 540C40 580 36 620 50 680C62 760 80 850 112 930C140 1000 190 1060 232 1092C270 1090 330 1062 400 1030C450 1010 520 930 580 860C640 790 690 720 712 660C730 600 728 500 700 430C640 340 520 280 420 290C300 300 160 400 60 540Z"/></clipPath>
  <radialGradient id="fsk" gradientUnits="userSpaceOnUse" cx="520" cy="470" r="620"><stop offset="0" stop-color="#f1ece5"/><stop offset="0.22" stop-color="#d9c9b9"/><stop offset="0.5" stop-color="#b59c89"/><stop offset="0.78" stop-color="#8e7665"/><stop offset="1" stop-color="#5f4e44"/></radialGradient>
  <filter color-interpolation-filters="sRGB" id="fb1"><feGaussianBlur stdDeviation="7"/></filter>
  <filter color-interpolation-filters="sRGB" id="fb2"><feGaussianBlur stdDeviation="22"/></filter>
  <filter color-interpolation-filters="sRGB" id="fb3"><feGaussianBlur stdDeviation="4"/></filter>
</defs>
<!-- neck -->
<path d="M150 1000L260 1100L340 1070L300 980Z" fill="#a88e7a" filter="url(#fb1)"/>
<g filter="url(#fb1)"><use href="#fcp" fill="url(#fsk)"/></g>
<g clip-path="url(#fcl)">
  <g filter="url(#fb2)">
    <ellipse cx="545" cy="440" rx="150" ry="115" fill="#ffffff" opacity="0.85"/>
    <ellipse cx="400" cy="700" rx="55" ry="130" transform="rotate(-8 400 700)" fill="#f6efe6" opacity="0.95"/>
    <ellipse cx="570" cy="800" rx="80" ry="80" fill="#e9dccf" opacity="0.7"/>
    <path d="M40 520L230 450L200 700L230 900L250 1100L100 960L40 700Z" fill="#75604f" opacity="0.85"/>
    <ellipse cx="300" cy="790" rx="50" ry="70" fill="#7a6152" opacity="0.75"/>
    <ellipse cx="330" cy="1040" rx="130" ry="45" transform="rotate(-18 330 1040)" fill="#8a7362" opacity="0.7"/>
    <ellipse cx="640" cy="640" rx="60" ry="100" fill="#b89f8c" opacity="0.6"/>
  </g>
  <g filter="url(#fb1)" fill="none" stroke-linecap="round">
    <path d="M196 498C250 488 300 500 345 535" stroke="#4a3b33" stroke-width="26" opacity="0.85"/>
    <path d="M478 612C540 600 600 612 655 645" stroke="#4a3b33" stroke-width="24" opacity="0.8"/>
    <path d="M225 580C265 590 300 600 340 612" stroke="#2a2220" stroke-width="22"/>
    <path d="M500 682C540 690 575 696 612 700" stroke="#2a2220" stroke-width="20"/>
    <path d="M240 620C280 632 310 636 340 634" stroke="#8c7766" stroke-width="14" opacity="0.7"/>
    <path d="M285 842C320 862 370 862 410 842" stroke="#4e3c33" stroke-width="22"/>
    <path d="M222 902C270 905 330 930 400 952" stroke="#6a4640" stroke-width="18"/>
    <path d="M250 948C300 985 360 990 400 968" stroke="#cf9f97" stroke-width="30"/>
  </g>
</g>
<!-- hair -->
<g filter="url(#fb1)">
  <path d="M40 230C50 170 110 110 200 50C280 10 400 -10 600 -10C700 0 800 60 880 200C900 280 880 360 860 420C860 500 830 600 800 640C770 690 740 720 716 730C716 660 730 520 700 430C650 350 560 300 480 285C440 280 380 298 280 340C200 380 130 440 90 500C70 530 60 560 52 590C30 520 36 440 60 350C40 320 36 270 40 230Z" fill="#16191a"/>
  <g fill="none" stroke-linecap="round" opacity="0.85">
    <path d="M330 90C450 40 600 60 700 140" stroke="#34383a" stroke-width="26"/>
    <path d="M520 150C640 150 760 220 830 330" stroke="#3a3e40" stroke-width="24"/>
    <path d="M160 230C260 150 380 140 480 180" stroke="#2b2f31" stroke-width="24"/>
    <path d="M640 300C740 360 790 460 790 580" stroke="#2e3234" stroke-width="22"/>
    <path d="M120 330C180 280 260 260 330 270" stroke="#0c0e0f" stroke-width="26"/>
    <path d="M560 230C660 270 720 340 760 430" stroke="#0c0e0f" stroke-width="22"/>
  </g>
</g>
</g>
<rect x="30" y="28" width="1660" height="930" fill="url(#cdark)" opacity="0.5"/>
<rect x="30" y="28" width="760" height="930" fill="url(#cleft)"/>
</g>
</g>
<rect x="1412.3" y="314" width="86" height="28.3" fill="#0a0a0a" opacity="0.82"/>
<g>
  <rect x="1425.4" y="317.6" width="8.4" height="15.6" rx="4.2" fill="#f2f2f2"/>
  <path d="M1425.4 328.5H1433.8V329A4.2 4.2 0 0 1 1425.4 329Z" fill="#3fe079"/>
  <path d="M1421.4 325.4V327.2A8.2 8.2 0 0 0 1437.8 327.2V325.4M1429.6 335.4V337.6" fill="none" stroke="#f2f2f2" stroke-width="2.2" stroke-linecap="round"/>
</g>
<g stroke="#fff" stroke-width="0.5"><text x="1447.6" y="333" font-family="Liberation Sans, Noto Sans CJK SC, sans-serif" font-size="15" fill="#ffffff">王子耕</text></g>
<!-- tile 2 -->
<rect x="1410.2" y="359.1" width="302" height="169.8" rx="4" fill="#232426" stroke="url(#tbd)" stroke-width="1.8"/>
<circle cx="1560.5" cy="434" r="41.4" fill="#0a6cff"/>
<text x="1534.5" y="443.6" font-family="Liberation Sans, Noto Sans CJK SC, sans-serif" font-size="26" fill="#ffffff">黄露</text>
<rect x="1412.3" y="497.8" width="70.6" height="28.4" fill="#111213"/>
<use href="#micoff" x="1429.7" y="511.5"/>
<g stroke="#fff" stroke-width="0.3"><text x="1447.6" y="517.4" font-family="Liberation Sans, Noto Sans CJK SC, sans-serif" font-size="15" fill="#ffffff">黄露</text></g>
<!-- tile 3 -->
<rect x="1410.2" y="543.3" width="302" height="169.8" rx="4" fill="#232426" stroke="url(#tbd)" stroke-width="1.8"/>
<g id="avatar3" clip-path="url(#av3)"><g transform="translate(1510 570) scale(0.083056)">
<defs><filter color-interpolation-filters="sRGB" id="a3b"><feGaussianBlur stdDeviation="20"/></filter><filter color-interpolation-filters="sRGB" id="a3c"><feGaussianBlur stdDeviation="10"/></filter></defs>
<rect x="90" y="60" width="1040" height="1050" fill="#0c0c0f"/>
<g filter="url(#a3b)">
  <path d="M90 200L330 180L300 420L330 640L400 760L300 820L90 860Z" fill="#a29fa5"/>
  <path d="M90 300L250 260L250 700L90 760Z" fill="#bcb9be"/>
  <path d="M960 260L1130 300V780L960 800L930 700L990 480Z" fill="#b7a69b"/>
  <path d="M1010 330L1130 360V640L1010 620Z" fill="#cdbfb2"/>
  <path d="M430 60H900L880 170C760 120 600 110 470 160Z" fill="#b9adab"/>
  <path d="M320 220L480 200L520 300L440 420L330 470Z" fill="#3a3238" opacity="0.9"/>
  <path d="M180 780L420 740L560 860L640 1000L600 1110H300L200 950Z" fill="#dcd8da"/>
  <path d="M380 800L520 820L600 960L560 1100L450 1100Z" fill="#efecee"/>
  <path d="M640 900L900 860L980 760L1040 900L900 1080L660 1110Z" fill="#2a2225"/>
  <path d="M900 880L1000 800L1060 900L960 1020Z" fill="#8f7f7c"/>
  <path d="M700 980L800 940L820 1040L720 1080Z" fill="#5a4a4c"/>
</g>
<g filter="url(#a3c)">
  <ellipse cx="540" cy="600" rx="58" ry="30" fill="#8d7f40" opacity="0.75"/>
  <ellipse cx="520" cy="505" rx="40" ry="30" fill="#7a4f45" opacity="0.5"/>
  <ellipse cx="822" cy="612" rx="52" ry="22" fill="#7c5e3c" opacity="0.7"/>
  <path d="M700 560L655 730H740Z" fill="#f4f2f3"/>
  <path d="M440 700C470 690 520 700 560 725C660 765 800 745 880 705C910 695 918 700 916 730C910 800 870 840 800 862C680 890 560 880 480 852C450 820 436 760 440 700Z" fill="#12b0ee"/>
</g>
<g fill="none" stroke="#cfcfd2" stroke-width="8" stroke-linecap="round" filter="url(#a3c)">
  <path d="M300 270C290 360 300 440 312 500C326 580 350 680 400 762"/>
  <path d="M495 215C540 250 555 300 545 350C530 410 470 470 450 520C436 580 445 640 475 690"/>
  <path d="M840 195C800 215 780 250 795 300C815 360 870 420 895 460C920 520 915 600 880 690"/>
  <path d="M985 330C995 400 992 480 975 560C960 620 945 660 930 700"/>
</g>
</g>
</g>
<rect x="1413" y="682" width="29" height="28.6" fill="#ff8a1e"/>
<circle cx="1427.6" cy="691.8" r="4.4" fill="#fff"/>
<path d="M1418.6 705.6C1418.6 699.6 1422 697 1427.6 697C1433.2 697 1436.6 699.6 1436.6 705.6Z" fill="#fff"/>
<rect x="1443.4" y="682" width="56.2" height="28.6" fill="#111213"/>
<use href="#micoff" x="1461.3" y="695.8"/>
<g stroke="#fff" stroke-width="0.3"><text x="1479.6" y="701.6" font-family="Liberation Sans, Noto Sans CJK SC, sans-serif" font-size="15" fill="#ffffff">晚</text></g>
<!-- tile 4 -->
<rect x="1410.2" y="727.5" width="302" height="169.8" rx="4" fill="#232426" stroke="url(#tbd)" stroke-width="1.8"/>
<g id="avatar4" clip-path="url(#av4)"><g transform="translate(1510 754) scale(0.083056)">
<defs><filter color-interpolation-filters="sRGB" id="a4b"><feGaussianBlur stdDeviation="38"/></filter><filter color-interpolation-filters="sRGB" id="a4c"><feGaussianBlur stdDeviation="10"/></filter>
<linearGradient id="a4g" x1="0" y1="0" x2="0.3" y2="1"><stop offset="0" stop-color="#5a8a84"/><stop offset="0.45" stop-color="#6da59c"/><stop offset="0.7" stop-color="#3f7d74"/><stop offset="1" stop-color="#2c645e"/></linearGradient></defs>
<rect x="90" y="60" width="1040" height="1050" fill="url(#a4g)"/>
<g filter="url(#a4b)">
  <path d="M100 400L300 300L420 520L330 820L150 800Z" fill="#86bfb4"/>
  <path d="M600 420L900 400L1020 520L860 640L620 600Z" fill="#4f8c80"/>
  <path d="M700 800L1100 700V1000L760 1060Z" fill="#4a7f86"/>
  <path d="M500 650L720 680L700 780L540 760Z" fill="#28575a"/>
  <path d="M640 230L820 260L780 330L680 320Z" fill="#8cc0b4" opacity="0.8"/>
</g>
<g filter="url(#a4c)">
  <path d="M860 300L960 240L1090 300L1090 440L930 420L880 350Z" fill="#08130f"/>
  <path d="M1000 460L1110 440V620L1000 600L940 640L900 600Z" fill="#cbb9a0"/>
  <path d="M870 320C780 360 660 420 560 480" fill="none" stroke="#99705a" stroke-width="34" stroke-linecap="round"/>
  <ellipse cx="490" cy="545" rx="80" ry="62" fill="#a2705b"/>
  <path d="M450 610C560 640 680 690 780 680C880 670 980 630 1090 570" fill="none" stroke="#b98f78" stroke-width="36" stroke-linecap="round"/>
  <path d="M900 640C960 630 1040 600 1100 560" fill="none" stroke="#d9c7b0" stroke-width="30" stroke-linecap="round"/>
  <ellipse cx="545" cy="572" rx="62" ry="16" transform="rotate(12 545 572)" fill="#eef3ef"/>
  <path d="M520 640L640 650L690 690L600 700Z" fill="#a5e1dc"/>
</g>
</g>
</g>
<rect x="1413" y="866.4" width="74.6" height="28.6" fill="#111213"/>
<use href="#micoff" x="1429.7" y="880.2"/>
<g stroke="#fff" stroke-width="0.3"><text x="1447.4" y="886" font-family="Liberation Sans, Noto Sans CJK SC, sans-serif" font-size="15" fill="#ffffff">金</text></g>
<text x="1462.4" y="885.6" font-family="Liberation Sans, sans-serif" font-size="15.5" fill="#fff">Jin</text>
<!-- tile 5 -->
<rect x="1410.2" y="911.7" width="302" height="169.8" rx="4" fill="url(#t5g)" stroke="#2d2e31" stroke-width="1.8"/>
<g id="avatar5" clip-path="url(#av5)"><g transform="translate(1510 938) scale(0.083056)">
<defs><filter color-interpolation-filters="sRGB" id="a5b"><feGaussianBlur stdDeviation="16"/></filter><filter color-interpolation-filters="sRGB" id="a5c"><feGaussianBlur stdDeviation="4"/></filter></defs>
<rect x="90" y="60" width="1040" height="1050" fill="#b8703f"/>
<g filter="url(#a5b)">
  <path d="M90 380L330 300L420 440L200 520L180 900L90 900Z" fill="#dcd6cc"/>
  <path d="M520 80H760L720 290L640 230Z" fill="#e6e2d8"/>
  <path d="M330 180L620 200L650 420L420 440Z" fill="#c27a48"/>
  <path d="M760 120L1000 260L1000 420L840 440L740 300Z" fill="#8a4a32"/>
  <path d="M850 400L1000 300L1110 420L1100 640L900 520Z" fill="#2b5fae"/>
  <path d="M960 380L1040 400L1020 470L950 450Z" fill="#c46a3a"/>
  <path d="M330 720L450 690L560 720L600 860L520 1000L420 1060L330 900Z" fill="#235ea9"/>
  <path d="M440 740L540 760L560 900L470 920Z" fill="#dfe6ee"/>
  <path d="M600 780L760 740L830 900L760 1080L600 1060Z" fill="#c9d1d9"/>
  <path d="M820 760L1080 700L1090 900L940 1080L820 1000Z" fill="#b9c0c8"/>
  <path d="M850 900L960 880L950 1010L860 1010Z" fill="#1a1a1e"/>
  <path d="M640 700L820 720L800 800L700 770Z" fill="#8a4a2e"/>
  <path d="M180 860L330 800L360 1000L240 1000Z" fill="#c9783f"/>
</g>
<g filter="url(#a5c)" fill="none" stroke-linecap="round">
  <path d="M240 330L330 320M230 400L320 360M260 470L330 400M450 310L560 300M470 330L440 420M540 320L500 420M560 350L620 330" stroke="#cc1f2b" stroke-width="16"/>
  <path d="M430 230L640 225" stroke="#c01f28" stroke-width="14"/>
  <path d="M330 210H620M520 90L760 300M340 220C330 330 360 400 420 440M640 230L650 460M240 250L330 180M130 600L220 540" stroke="#1d1a1a" stroke-width="9"/>
  <path d="M330 750L400 720M240 880L330 840M260 930L350 890M340 700L400 760" stroke="#1d1a1a" stroke-width="10"/>
</g>
<g transform="rotate(4 610 585)" filter="url(#a5c)">
  <rect x="195" y="470" width="840" height="235" rx="118" fill="#3b3c41" stroke="#e6e6e6" stroke-width="8"/>
  <text x="372" y="638" font-family="Liberation Sans, sans-serif" font-size="135" font-weight="bold" fill="#ececec" textLength="660" lengthAdjust="spacingAndGlyphs" transform="skewX(-8)">I'M MAD!</text>
</g>
<rect x="90" y="60" width="1040" height="1050" fill="#0c0c0e" opacity="0.28"/>
</g>
</g>
<rect x="1413" y="1050.8" width="97" height="28" fill="#0b0b0c"/>
<use href="#micoff" x="1429.7" y="1064.4" opacity="0.5"/>
<text x="1447.3" y="1070" font-family="Liberation Sans, sans-serif" font-size="15.5" fill="#8f9092" textLength="56" lengthAdjust="spacingAndGlyphs">zhaowh</text>
</svg>
<div id="leave" class="abs"></div>
<svg class="ov" viewBox="0 0 1728 1204" aria-label="bottom toolbar">
<g fill="#4a4b50">
  <!-- mic muted -->
  <g>
    <rect x="433.4" y="1135.1" width="11.6" height="23.1" rx="5.8"/>
    <path d="M429.1 1151.8A10.3 10.3 0 0 0 449.7 1151.8" fill="none" stroke="#4a4b50" stroke-width="2.8" stroke-linecap="round"/>
    <path d="M439.4 1162V1168.4M432.2 1168.6H446.6" fill="none" stroke="#4a4b50" stroke-width="2.7" stroke-linecap="round"/>
    <path d="M427.9 1164.1L450.7 1141.2" stroke="#fafafa" stroke-width="5.2" stroke-linecap="round"/>
    <path d="M427.9 1164.1L450.7 1141.2" stroke="#ff3a3a" stroke-width="2.7" stroke-linecap="round"/>
  </g>
  <path d="M499 1157.9L505.2 1150L511.5 1157.9Z" fill="#5b5e65"/>
  <!-- camera off -->
  <g>
    <rect x="537.2" y="1140.9" width="24.8" height="23" rx="2.6"/>
    <path d="M563.7 1148.4L570.3 1143.2Q572 1142 572 1144V1161.4Q572 1163.4 570.3 1162.2L563.7 1156.6Z"/>
    <path d="M540.1 1164.3L563.2 1141" stroke="#fafafa" stroke-width="5" stroke-linecap="round"/>
    <path d="M540.1 1164.3L563.2 1141" stroke="#ff3a3a" stroke-width="2.6" stroke-linecap="round"/>
  </g>
  <path d="M597.9 1157.9L604.1 1150L610.4 1157.9Z" fill="#5b5e65"/>
  <!-- share screen -->
  <g>
    <rect x="644.4" y="1140" width="34.8" height="23" rx="3"/>
    <rect x="653.2" y="1166.2" width="17.2" height="2.7" rx="1.35"/>
    <path d="M663.2 1145.3L668 1150L663.2 1154.8V1152C659.6 1152 657.4 1153.6 656.2 1157.6C655.6 1152 658.6 1148.4 663.2 1148Z" fill="#f6f6f6"/>
  </g>
  <!-- invite -->
  <g>
    <circle cx="760.8" cy="1143.7" r="5.8"/>
    <path d="M746.5 1167.4C746.5 1159 749.8 1153 756 1151.2A8.8 8.8 0 0 0 765.6 1151.2C771.9 1153 775.2 1159 775.2 1167.4Z"/>
    <circle cx="771.1" cy="1159.9" r="9" fill="#fafafa"/>
    <circle cx="771.1" cy="1159.9" r="7.1"/>
    <path d="M771.1 1155.6V1164.2M766.8 1159.9H775.4" stroke="#fafafa" stroke-width="2.1" stroke-linecap="round"/>
  </g>
  <!-- members -->
  <g>
    <circle cx="854.8" cy="1143.7" r="5.8"/>
    <path d="M840.3 1167.4C840.3 1159 843.6 1153 849.9 1151.2A8.8 8.8 0 0 0 859.6 1151.2C865.9 1153 869.5 1159 869.5 1167.4Z"/>
    <circle cx="851.6" cy="1143.7" r="7" fill="#fafafa"/>
    <path d="M835.9 1168.6C835.9 1158.4 839.6 1152 846.8 1150A8.8 8.8 0 0 0 856.4 1150C863.6 1152 867.5 1158.4 867.5 1168.6Z" fill="#fafafa"/>
    <circle cx="851.6" cy="1143.7" r="5.8"/>
    <path d="M837.1 1167.4C837.1 1159 840.4 1153 846.7 1151.2A8.8 8.8 0 0 0 856.4 1151.2C862.7 1153 866.3 1159 866.3 1167.4Z"/>
  </g>
  <!-- chat -->
  <g>
    <path d="M930 1137.6H953.1Q956.1 1137.6 956.1 1140.6V1157.6Q956.1 1159.8 954 1161L947.2 1165Q946 1165.7 946 1164.3V1160.7H930Q927 1160.7 927 1157.7V1140.6Q927 1137.6 930 1137.6Z"/>
    <circle cx="933.4" cy="1148.6" r="2.2" fill="#fafafa"/>
    <circle cx="940.7" cy="1148.6" r="2.2" fill="#fafafa"/>
    <circle cx="948.1" cy="1148.6" r="2.2" fill="#fafafa"/>
  </g>
  <!-- live -->
  <g>
    <rect x="1024.4" y="1141.2" width="32" height="22.7" rx="3.6"/>
    <path d="M1031.6 1137.6L1034.6 1142M1049.4 1137.6L1046.6 1142" stroke="#4a4b50" stroke-width="2.7" stroke-linecap="round"/>
    <path d="M1037.5 1146.9L1046.6 1152.8L1037.5 1158.7Z" fill="#f4f4f4"/>
    <circle cx="1053.8" cy="1161.4" r="4.7" fill="#fafafa"/>
    <circle cx="1053.8" cy="1161.4" r="3" fill="#ff3a3a"/>
  </g>
  <!-- more -->
  <circle cx="1127" cy="1152" r="3.6"/><circle cx="1139.5" cy="1152" r="3.6"/><circle cx="1152.1" cy="1152" r="3.6"/>
</g>
<g stroke="#2a2b2f" stroke-width="0.25" font-family="Liberation Sans, Noto Sans CJK SC, sans-serif" font-size="15" fill="#2a2b2f">
<text x="409" y="1187.2">解除静音</text>
<text x="524.5" y="1187.2">开启视频</text>
<text x="632" y="1186.2">共享屏幕</text>
<text x="745.7" y="1187.2">邀请</text>
<text x="818.44" y="1187.2">成员(277)</text>
<text x="926.4" y="1183.6">聊天</text>
<text x="997.43" y="1187.4">直播(进行中)</text>
<text x="1124.3" y="1187.2">更多</text>
</g>
<g stroke="#f9605f" stroke-width="0.45"><text x="1581.7" y="1171" font-family="Liberation Sans, Noto Sans CJK SC, sans-serif" font-size="20" fill="#f9605f">离开会议</text></g>
</svg>

</body></html>
